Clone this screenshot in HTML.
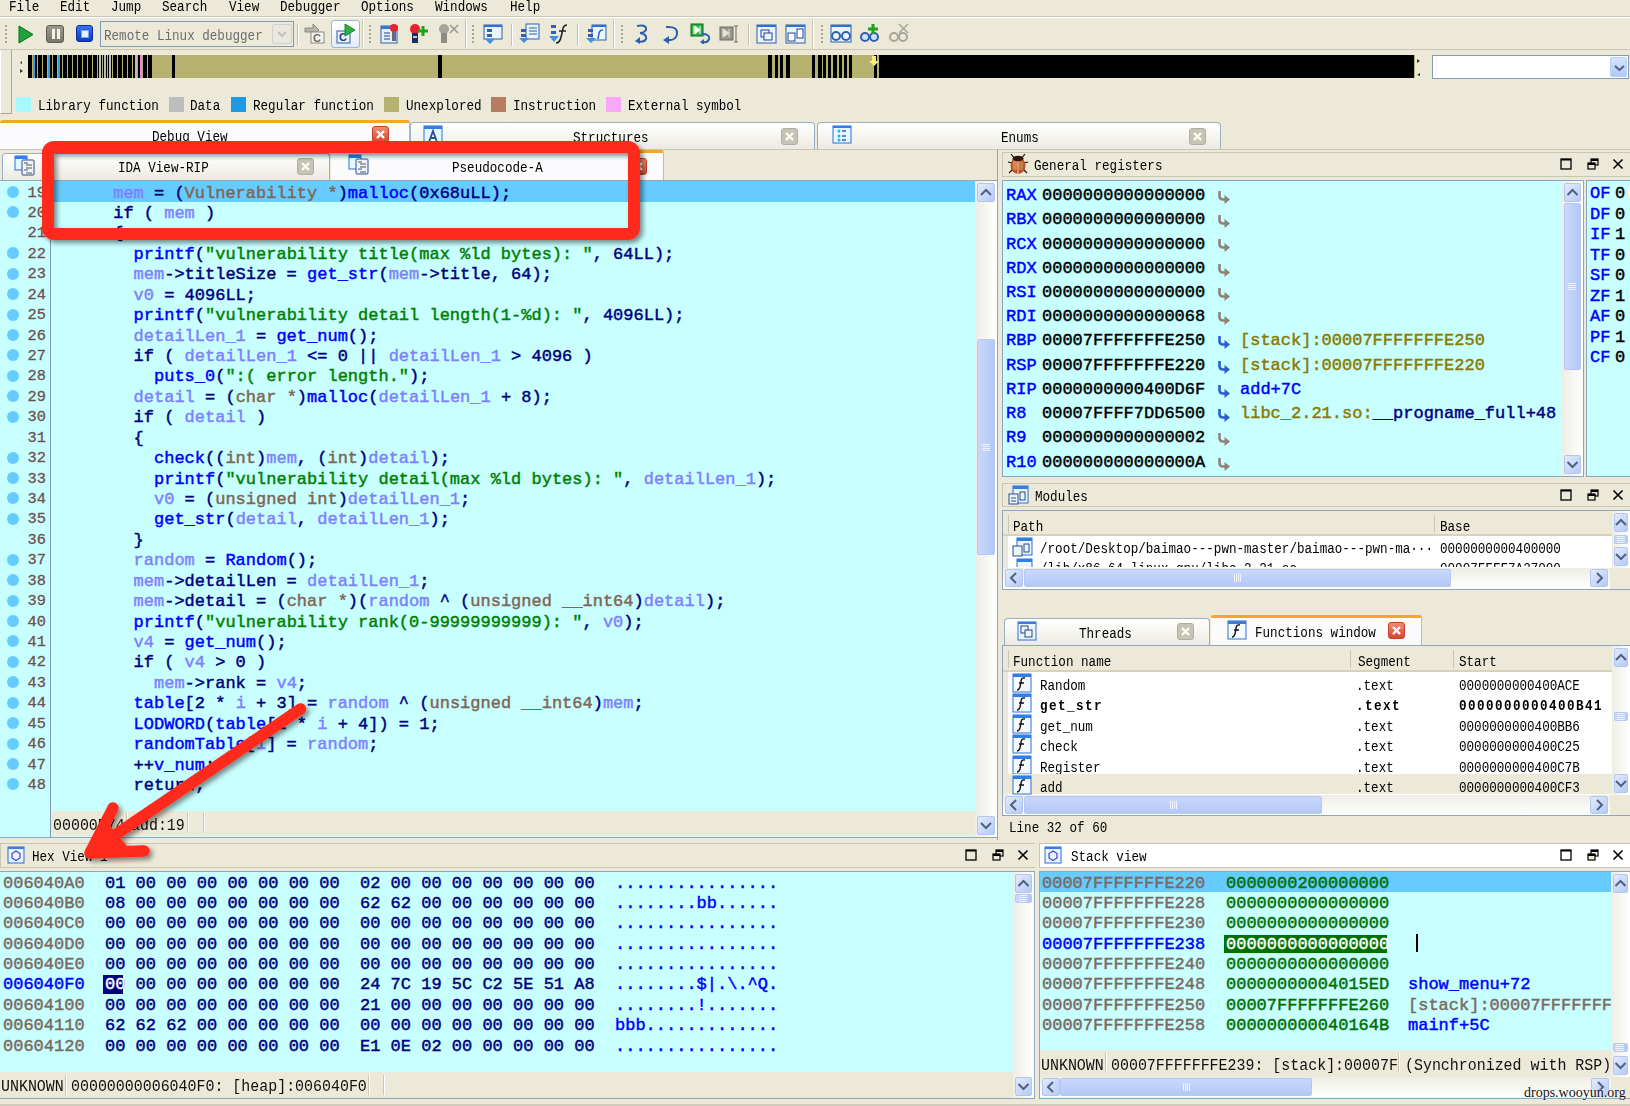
<!DOCTYPE html><html><head><meta charset="utf-8"><style>
*{margin:0;padding:0;box-sizing:border-box}
html,body{width:1630px;height:1106px;overflow:hidden;background:#ECE9D8;position:relative}
.t{position:absolute;white-space:pre;line-height:1}
.m{position:absolute;white-space:pre;font-family:'Liberation Mono', monospace;font-size:17px;line-height:20px;-webkit-text-stroke:0.45px currentColor}
.ui{position:absolute;white-space:pre;font-family:'Liberation Mono', monospace;font-size:12.6px;line-height:14px;color:#000}
.nv{color:#000080} .bl{color:#0000FF} .pu{color:#8080FF} .gr{color:#008000} .ty{color:#806656}
</style></head><body>
<div style="position:absolute;left:0px;top:16px;width:1630px;height:1px;background:#C9C6B4"></div>
<div style="position:absolute;left:0px;top:17px;width:1630px;height:1px;background:#FFFFFF"></div>
<div class="t" style="left:9px;top:-0.9999999999999998px;font-family:'Liberation Mono', monospace;font-size:12.6px;line-height:14px;color:#000;transform:scaleY(1.16);transform-origin:0 0;">File</div>
<div class="t" style="left:60px;top:-0.9999999999999998px;font-family:'Liberation Mono', monospace;font-size:12.6px;line-height:14px;color:#000;transform:scaleY(1.16);transform-origin:0 0;">Edit</div>
<div class="t" style="left:111px;top:-0.9999999999999998px;font-family:'Liberation Mono', monospace;font-size:12.6px;line-height:14px;color:#000;transform:scaleY(1.16);transform-origin:0 0;">Jump</div>
<div class="t" style="left:162px;top:-0.9999999999999998px;font-family:'Liberation Mono', monospace;font-size:12.6px;line-height:14px;color:#000;transform:scaleY(1.16);transform-origin:0 0;">Search</div>
<div class="t" style="left:229px;top:-0.9999999999999998px;font-family:'Liberation Mono', monospace;font-size:12.6px;line-height:14px;color:#000;transform:scaleY(1.16);transform-origin:0 0;">View</div>
<div class="t" style="left:280px;top:-0.9999999999999998px;font-family:'Liberation Mono', monospace;font-size:12.6px;line-height:14px;color:#000;transform:scaleY(1.16);transform-origin:0 0;">Debugger</div>
<div class="t" style="left:361px;top:-0.9999999999999998px;font-family:'Liberation Mono', monospace;font-size:12.6px;line-height:14px;color:#000;transform:scaleY(1.16);transform-origin:0 0;">Options</div>
<div class="t" style="left:435px;top:-0.9999999999999998px;font-family:'Liberation Mono', monospace;font-size:12.6px;line-height:14px;color:#000;transform:scaleY(1.16);transform-origin:0 0;">Windows</div>
<div class="t" style="left:510px;top:-0.9999999999999998px;font-family:'Liberation Mono', monospace;font-size:12.6px;line-height:14px;color:#000;transform:scaleY(1.16);transform-origin:0 0;">Help</div>
<div style="position:absolute;left:0px;top:49px;width:1630px;height:1px;background:#C9C6B4"></div>
<div style="position:absolute;left:5px;top:25px;width:2px;height:2px;background:#A8A593"></div><div style="position:absolute;left:5px;top:29px;width:2px;height:2px;background:#A8A593"></div><div style="position:absolute;left:5px;top:33px;width:2px;height:2px;background:#A8A593"></div><div style="position:absolute;left:5px;top:37px;width:2px;height:2px;background:#A8A593"></div><div style="position:absolute;left:5px;top:41px;width:2px;height:2px;background:#A8A593"></div>
<div style="position:absolute;left:369px;top:25px;width:2px;height:2px;background:#A8A593"></div><div style="position:absolute;left:369px;top:29px;width:2px;height:2px;background:#A8A593"></div><div style="position:absolute;left:369px;top:33px;width:2px;height:2px;background:#A8A593"></div><div style="position:absolute;left:369px;top:37px;width:2px;height:2px;background:#A8A593"></div><div style="position:absolute;left:369px;top:41px;width:2px;height:2px;background:#A8A593"></div>
<div style="position:absolute;left:472px;top:25px;width:2px;height:2px;background:#A8A593"></div><div style="position:absolute;left:472px;top:29px;width:2px;height:2px;background:#A8A593"></div><div style="position:absolute;left:472px;top:33px;width:2px;height:2px;background:#A8A593"></div><div style="position:absolute;left:472px;top:37px;width:2px;height:2px;background:#A8A593"></div><div style="position:absolute;left:472px;top:41px;width:2px;height:2px;background:#A8A593"></div>
<div style="position:absolute;left:621px;top:25px;width:2px;height:2px;background:#A8A593"></div><div style="position:absolute;left:621px;top:29px;width:2px;height:2px;background:#A8A593"></div><div style="position:absolute;left:621px;top:33px;width:2px;height:2px;background:#A8A593"></div><div style="position:absolute;left:621px;top:37px;width:2px;height:2px;background:#A8A593"></div><div style="position:absolute;left:621px;top:41px;width:2px;height:2px;background:#A8A593"></div>
<div style="position:absolute;left:821px;top:25px;width:2px;height:2px;background:#A8A593"></div><div style="position:absolute;left:821px;top:29px;width:2px;height:2px;background:#A8A593"></div><div style="position:absolute;left:821px;top:33px;width:2px;height:2px;background:#A8A593"></div><div style="position:absolute;left:821px;top:37px;width:2px;height:2px;background:#A8A593"></div><div style="position:absolute;left:821px;top:41px;width:2px;height:2px;background:#A8A593"></div>
<div style="position:absolute;left:362px;top:19px;width:1px;height:30px;background:#C9C6B4"></div>
<div style="position:absolute;left:363px;top:19px;width:1px;height:30px;background:#FFFFFF"></div>
<div style="position:absolute;left:465px;top:19px;width:1px;height:30px;background:#C9C6B4"></div>
<div style="position:absolute;left:466px;top:19px;width:1px;height:30px;background:#FFFFFF"></div>
<div style="position:absolute;left:613px;top:19px;width:1px;height:30px;background:#C9C6B4"></div>
<div style="position:absolute;left:614px;top:19px;width:1px;height:30px;background:#FFFFFF"></div>
<div style="position:absolute;left:812px;top:19px;width:1px;height:30px;background:#C9C6B4"></div>
<div style="position:absolute;left:813px;top:19px;width:1px;height:30px;background:#FFFFFF"></div>
<div style="position:absolute;left:297px;top:24px;width:1px;height:22px;background:#C5C2B2"></div>
<div style="position:absolute;left:298px;top:24px;width:1px;height:22px;background:#FFFFFF"></div>
<div style="position:absolute;left:511px;top:24px;width:1px;height:22px;background:#C5C2B2"></div>
<div style="position:absolute;left:512px;top:24px;width:1px;height:22px;background:#FFFFFF"></div>
<div style="position:absolute;left:577px;top:24px;width:1px;height:22px;background:#C5C2B2"></div>
<div style="position:absolute;left:578px;top:24px;width:1px;height:22px;background:#FFFFFF"></div>
<div style="position:absolute;left:748px;top:24px;width:1px;height:22px;background:#C5C2B2"></div>
<div style="position:absolute;left:749px;top:24px;width:1px;height:22px;background:#FFFFFF"></div>
<svg style="position:absolute;left:17px;top:25px" width="18" height="19"><path d="M2 1 L16 9.5 L2 18 Z" fill="#1FA33A" stroke="#0B6B1D" stroke-width="1"/></svg>
<div style="position:absolute;left:46px;top:25px;width:18px;height:18px;background:linear-gradient(#9C9A8C,#7A786B);border:1px solid #5F5D52;border-radius:3px"><div style="position:absolute;left:5px;top:3px;width:3px;height:10px;background:#F2F2EA"></div><div style="position:absolute;left:10px;top:3px;width:3px;height:10px;background:#F2F2EA"></div></div>
<div style="position:absolute;left:76px;top:25px;width:17px;height:17px;background:linear-gradient(#3A72F0,#0A3DC8);border:1px solid #0A2A9A;border-radius:3px"><div style="position:absolute;left:4px;top:4px;width:8px;height:8px;background:#E6F0FF;border:1px solid #7AA0F0"></div></div>
<div style="position:absolute;left:100px;top:21px;width:194px;height:26px;background:#ECE9D8;border:1px solid #7F9DB9"></div>
<div class="t" style="left:104px;top:28.3px;font-family:'Liberation Mono', monospace;font-size:12.6px;line-height:14px;color:#6D6D6D;transform:scaleY(1.16);transform-origin:0 0;">Remote Linux debugger</div>
<div style="position:absolute;left:272px;top:24px;width:20px;height:20px;background:#E8E7E0;border:1px solid #D2D1C8;border-radius:2px"><svg width="18" height="18" style="position:absolute;left:0;top:0"><path d="M5 7 L9 11 L13 7" fill="none" stroke="#C4C3BA" stroke-width="2"/></svg></div>
<svg style="position:absolute;left:304px;top:23px" width="22" height="21" viewBox="0 0 22 21"><path d="M1 5 L9 5 L9 1 L15 7 L9 13 L9 9 L1 9 Z" fill="#B8B6A8" stroke="#8A887C"/><rect x="7" y="9" width="13" height="11" fill="#F4F3EE" stroke="#8A887C"/><text x="9" y="19" font-family="Liberation Sans" font-weight="bold" font-size="11" fill="#6E6C62">C</text></svg>
<div style="position:absolute;left:331px;top:20px;width:29px;height:28px;background:linear-gradient(#FFFFFF,#E3ECF8);border:1px solid #9CB5D9;border-radius:3px"></div>
<svg style="position:absolute;left:335px;top:23px" width="22" height="22" viewBox="0 0 22 22"><rect x="2" y="8" width="13" height="12" fill="#E8F0FA" stroke="#2E5AA8"/><text x="4" y="18" font-family="Liberation Sans" font-weight="bold" font-size="11" fill="#1B3F8F">C</text><path d="M10 1 L10 13 L20 7 Z" fill="#2BB040" stroke="#138A28"/></svg>
<svg style="position:absolute;left:380px;top:23px" width="20" height="21" viewBox="0 0 20 21"><rect x="1" y="3" width="16" height="17" fill="#E6F0FB" stroke="#2F5FB0"/><rect x="1" y="3" width="16" height="3" fill="#3A74D8"/><path d="M4 10h6M4 13h6M4 16h6" stroke="#23448A"/><circle cx="14" cy="5" r="4" fill="#E8222A"/><rect x="12" y="8" width="4" height="10" fill="#6B6A7A"/></svg>
<svg style="position:absolute;left:409px;top:23px" width="20" height="21" viewBox="0 0 20 21"><circle cx="6" cy="6" r="5" fill="#E8222A"/><rect x="3" y="10" width="6" height="10" fill="#1B2A6B"/><rect x="4" y="13" width="4" height="2" fill="#C8C8C8"/><path d="M14 3v10M9 8h10" stroke="#23A020" stroke-width="3"/></svg>
<svg style="position:absolute;left:438px;top:23px" width="21" height="21" viewBox="0 0 21 21"><circle cx="6" cy="6" r="5" fill="#A7A598"/><rect x="3" y="10" width="6" height="10" fill="#8E8C80"/><path d="M12 2 L20 10 M20 2 L12 10" stroke="#9A988C" stroke-width="1.5"/></svg>
<svg style="position:absolute;left:483px;top:23px" width="21" height="21" viewBox="0 0 21 21"><rect x="1" y="2" width="18" height="14" fill="#EAF4FC" stroke="#2F5FB0"/><rect x="1" y="2" width="18" height="2" fill="#2F6FD8"/><rect x="4" y="6" width="5" height="3" fill="#2F5FB0"/><rect x="4" y="11" width="5" height="3" fill="#2F5FB0"/><path d="M2 16 L12 16 L7 21 Z" fill="#3F8EE8"/></svg>
<svg style="position:absolute;left:519px;top:23px" width="21" height="21" viewBox="0 0 21 21"><rect x="7" y="1" width="13" height="15" fill="#EAF4FC" stroke="#2F5FB0"/><path d="M10 5h8M10 8h8M10 11h8" stroke="#2F5FB0"/><rect x="2" y="6" width="5" height="3" fill="#2F5FB0"/><rect x="2" y="11" width="5" height="3" fill="#2F5FB0"/><path d="M0 15 L10 15 L5 20 Z" fill="#3F8EE8"/></svg>
<svg style="position:absolute;left:549px;top:23px" width="21" height="21" viewBox="0 0 21 21"><rect x="2" y="2" width="5" height="3" fill="#2F5FB0"/><rect x="2" y="8" width="5" height="3" fill="#2F5FB0"/><path d="M0 13 L10 13 L5 19 Z" fill="#3F8EE8"/><path d="M18 2 C13 2 14 8 12 14 C11 19 9 20 7 20 M10 8 h7" fill="none" stroke="#222" stroke-width="1.6"/></svg>
<svg style="position:absolute;left:586px;top:23px" width="21" height="21" viewBox="0 0 21 21"><rect x="6" y="2" width="14" height="15" fill="#EAF4FC" stroke="#2F5FB0"/><rect x="6" y="2" width="14" height="2" fill="#2F6FD8"/><rect x="2" y="6" width="5" height="3" fill="#2F5FB0"/><rect x="2" y="11" width="5" height="3" fill="#2F5FB0"/><path d="M0 15 L10 15 L5 20 Z" fill="#3F8EE8"/><path d="M17 7 C12 7 13 12 12 16" fill="none" stroke="#2F5FB0" stroke-width="1.5"/></svg>
<svg style="position:absolute;left:634px;top:23px" width="16" height="21" viewBox="0 0 16 21"><path d="M3 3 Q13 1 12 7 Q10 10 6 10 Q13 11 12 16 Q10 20 3 18" fill="none" stroke="#2F5FB0" stroke-width="2"/><path d="M1 18 L6 14 L6 21 Z" fill="#2F5FB0"/></svg>
<svg style="position:absolute;left:662px;top:23px" width="18" height="21" viewBox="0 0 18 21"><path d="M4 4 Q16 3 15 11 Q14 18 5 17" fill="none" stroke="#2F5FB0" stroke-width="2"/><path d="M1 17 L7 13 L7 21 Z" fill="#2F5FB0"/></svg>
<svg style="position:absolute;left:690px;top:23px" width="21" height="21" viewBox="0 0 21 21"><rect x="1" y="1" width="12" height="12" fill="#2BB040" stroke="#0D6B20"/><path d="M4 3 L4 11 M5 3 L10 7 L5 11 Z M10 3v8" stroke="#fff" fill="#fff"/><path d="M12 11 Q20 11 19 16 Q18 20 13 19" fill="none" stroke="#2F5FB0" stroke-width="2"/><path d="M10 19 L14 16 L14 22 Z" fill="#2F5FB0"/></svg>
<svg style="position:absolute;left:719px;top:23px" width="21" height="21" viewBox="0 0 21 21"><rect x="1" y="4" width="13" height="13" fill="#9A988C" stroke="#6E6C62"/><path d="M4 6 L4 14 L10 10 Z M10 6v8" stroke="#E6E4DA" fill="#E6E4DA"/><path d="M17 3v16 M15 3h4 M15 19h4" stroke="#6E6C62"/></svg>
<svg style="position:absolute;left:756px;top:23px" width="21" height="21" viewBox="0 0 21 21"><rect x="1" y="2" width="19" height="18" fill="#EAF4FC" stroke="#2F5FB0"/><rect x="1" y="2" width="19" height="2" fill="#2F6FD8"/><rect x="5" y="7" width="8" height="7" fill="none" stroke="#23448A"/><rect x="8" y="10" width="8" height="7" fill="#EAF4FC" stroke="#23448A"/></svg>
<svg style="position:absolute;left:785px;top:23px" width="21" height="21" viewBox="0 0 21 21"><rect x="1" y="2" width="19" height="18" fill="#EAF4FC" stroke="#2F5FB0"/><rect x="1" y="2" width="19" height="2" fill="#2F6FD8"/><rect x="3" y="10" width="7" height="8" fill="#fff" stroke="#23448A"/><rect x="12" y="6" width="6" height="9" fill="#fff" stroke="#23448A"/></svg>
<svg style="position:absolute;left:830px;top:23px" width="22" height="21" viewBox="0 0 22 21"><rect x="1" y="2" width="20" height="17" fill="#EAF4FC" stroke="#2F5FB0"/><rect x="1" y="2" width="20" height="2" fill="#2F6FD8"/><circle cx="6" cy="13" r="4" fill="none" stroke="#2F5FB0" stroke-width="2"/><circle cx="16" cy="13" r="4" fill="none" stroke="#2F5FB0" stroke-width="2"/></svg>
<svg style="position:absolute;left:859px;top:23px" width="22" height="21" viewBox="0 0 22 21"><circle cx="6" cy="14" r="4" fill="#CFE3F8" stroke="#2F5FB0" stroke-width="2"/><circle cx="15" cy="14" r="4" fill="#CFE3F8" stroke="#2F5FB0" stroke-width="2"/><path d="M14 1v10M9 6h10" stroke="#23A020" stroke-width="3"/></svg>
<svg style="position:absolute;left:888px;top:23px" width="23" height="21" viewBox="0 0 23 21"><circle cx="6" cy="14" r="4" fill="none" stroke="#A7A598" stroke-width="2"/><circle cx="15" cy="14" r="4" fill="none" stroke="#A7A598" stroke-width="2"/><path d="M11 1 L20 10 M20 1 L11 10" stroke="#A7A598" stroke-width="1.5"/></svg>
<div style="position:absolute;left:0px;top:50px;width:12px;height:64px;border-left:1px solid #FFFFFF;border-right:1px solid #ACA899;border-bottom:1px solid #ACA899"></div>
<svg style="position:absolute;left:19px;top:60px" width="5" height="16" viewBox="0 0 5 16"><path d="M1 3 L3 1 L3 4 Z M1 9 L4 11 L1 13 Z" fill="#333"/></svg>
<div style="position:absolute;left:28px;top:55px;width:1387px;height:23px;background:#B5B26F"></div><div style="position:absolute;left:28.0px;top:55px;width:3.7px;height:23px;background:#000"></div><div style="position:absolute;left:33.0px;top:55px;width:3.7px;height:23px;background:#000"></div><div style="position:absolute;left:38.0px;top:55px;width:3.7px;height:23px;background:#000"></div><div style="position:absolute;left:43.0px;top:55px;width:3.7px;height:23px;background:#000"></div><div style="position:absolute;left:48.0px;top:55px;width:3.7px;height:23px;background:#000"></div><div style="position:absolute;left:53.0px;top:55px;width:3.7px;height:23px;background:#000"></div><div style="position:absolute;left:58.0px;top:55px;width:3.7px;height:23px;background:#000"></div><div style="position:absolute;left:63.0px;top:55px;width:3.7px;height:23px;background:#000"></div><div style="position:absolute;left:68.0px;top:55px;width:3.7px;height:23px;background:#000"></div><div style="position:absolute;left:73.0px;top:55px;width:3.7px;height:23px;background:#000"></div><div style="position:absolute;left:78.0px;top:55px;width:3.7px;height:23px;background:#000"></div><div style="position:absolute;left:83.0px;top:55px;width:3.7px;height:23px;background:#000"></div><div style="position:absolute;left:88.0px;top:55px;width:3.7px;height:23px;background:#000"></div><div style="position:absolute;left:93.0px;top:55px;width:3.7px;height:23px;background:#000"></div><div style="position:absolute;left:98.0px;top:55px;width:3.7px;height:23px;background:#000"></div><div style="position:absolute;left:103.0px;top:55px;width:3.7px;height:23px;background:#000"></div><div style="position:absolute;left:108.0px;top:55px;width:3.7px;height:23px;background:#000"></div><div style="position:absolute;left:113.0px;top:55px;width:3.7px;height:23px;background:#000"></div><div style="position:absolute;left:118.0px;top:55px;width:3.7px;height:23px;background:#000"></div><div style="position:absolute;left:123.0px;top:55px;width:3.7px;height:23px;background:#000"></div><div style="position:absolute;left:128.0px;top:55px;width:3.7px;height:23px;background:#000"></div><div style="position:absolute;left:133.0px;top:55px;width:3.7px;height:23px;background:#000"></div><div style="position:absolute;left:138.0px;top:55px;width:3.7px;height:23px;background:#000"></div><div style="position:absolute;left:143.0px;top:55px;width:3.7px;height:23px;background:#000"></div><div style="position:absolute;left:148.0px;top:55px;width:3.7px;height:23px;background:#000"></div><div style="position:absolute;left:33px;top:55px;width:1.5px;height:23px;background:#2FA0E0"></div><div style="position:absolute;left:48px;top:55px;width:1.5px;height:23px;background:#2FA0E0"></div><div style="position:absolute;left:58px;top:55px;width:1.5px;height:23px;background:#2FA0E0"></div><div style="position:absolute;left:99px;top:55px;width:1.5px;height:23px;background:#BDBDBD"></div><div style="position:absolute;left:104px;top:55px;width:1.5px;height:23px;background:#BDBDBD"></div><div style="position:absolute;left:109px;top:55px;width:1.5px;height:23px;background:#BDBDBD"></div><div style="position:absolute;left:135px;top:55px;width:1.5px;height:23px;background:#BDBDBD"></div><div style="position:absolute;left:140px;top:55px;width:1.5px;height:23px;background:#F080F0"></div><div style="position:absolute;left:171.5px;top:55px;width:3.5px;height:23px;background:#000"></div><div style="position:absolute;left:438px;top:55px;width:3.5px;height:23px;background:#000"></div><div style="position:absolute;left:768px;top:55px;width:4px;height:23px;background:#000"></div><div style="position:absolute;left:774.8px;top:55px;width:3.5px;height:23px;background:#000"></div><div style="position:absolute;left:779.7px;top:55px;width:3.5px;height:23px;background:#000"></div><div style="position:absolute;left:786px;top:55px;width:3.6px;height:23px;background:#000"></div><div style="position:absolute;left:811.6px;top:55px;width:3.4px;height:23px;background:#000"></div><div style="position:absolute;left:818px;top:55px;width:3.5px;height:23px;background:#000"></div><div style="position:absolute;left:823px;top:55px;width:3.4px;height:23px;background:#000"></div><div style="position:absolute;left:827.8px;top:55px;width:3.5px;height:23px;background:#000"></div><div style="position:absolute;left:833.2px;top:55px;width:3.5px;height:23px;background:#000"></div><div style="position:absolute;left:838.6px;top:55px;width:3.4px;height:23px;background:#000"></div><div style="position:absolute;left:843.5px;top:55px;width:3.5px;height:23px;background:#000"></div><div style="position:absolute;left:849px;top:55px;width:3.4px;height:23px;background:#000"></div><div style="position:absolute;left:874px;top:55px;width:3.4px;height:23px;background:#000"></div><div style="position:absolute;left:879.4px;top:55px;width:534.6px;height:23px;background:#000"></div><svg style="position:absolute;left:869px;top:56px" width="10" height="10" viewBox="0 0 10 10"><path d="M3 0h4v5h3l-5 5l-5-5h3z" fill="#F8F070"/></svg>
<svg style="position:absolute;left:1415px;top:57px" width="6" height="20" viewBox="0 0 6 20"><path d="M2 2 L5 4 L2 6 Z M5 16 L2 18 L5 19 Z" fill="#333"/></svg>
<div style="position:absolute;left:1432px;top:55px;width:197px;height:24px;background:#fff;border:1px solid #7F9DB9"></div>
<div style="position:absolute;left:1610px;top:57px;width:17px;height:20px;background:linear-gradient(#D6E3FC,#B0C8F5);border:1px solid #B9CDF5;border-radius:2px"><svg style="position:absolute;left:0px;top:0px" width="17" height="20" viewBox="0 0 17 20"><path d="M4 8 L8.5 12 L13 8" fill="none" stroke="#4D6185" stroke-width="2"/></svg></div>
<div style="position:absolute;left:16px;top:97px;width:15px;height:15px;background:#A8F8FF"></div>
<div class="t" style="left:38px;top:97.8px;font-family:'Liberation Mono', monospace;font-size:12.6px;line-height:14px;color:#000;transform:scaleY(1.16);transform-origin:0 0;">Library function</div>
<div style="position:absolute;left:169px;top:97px;width:15px;height:15px;background:#BEBEBE"></div>
<div class="t" style="left:190px;top:97.8px;font-family:'Liberation Mono', monospace;font-size:12.6px;line-height:14px;color:#000;transform:scaleY(1.16);transform-origin:0 0;">Data</div>
<div style="position:absolute;left:231px;top:97px;width:15px;height:15px;background:#1E9AE5"></div>
<div class="t" style="left:253px;top:97.8px;font-family:'Liberation Mono', monospace;font-size:12.6px;line-height:14px;color:#000;transform:scaleY(1.16);transform-origin:0 0;">Regular function</div>
<div style="position:absolute;left:384px;top:97px;width:15px;height:15px;background:#B5B26F"></div>
<div class="t" style="left:406px;top:97.8px;font-family:'Liberation Mono', monospace;font-size:12.6px;line-height:14px;color:#000;transform:scaleY(1.16);transform-origin:0 0;">Unexplored</div>
<div style="position:absolute;left:491px;top:97px;width:15px;height:15px;background:#B87C60"></div>
<div class="t" style="left:513px;top:97.8px;font-family:'Liberation Mono', monospace;font-size:12.6px;line-height:14px;color:#000;transform:scaleY(1.16);transform-origin:0 0;">Instruction</div>
<div style="position:absolute;left:606px;top:97px;width:15px;height:15px;background:#F8A8F8"></div>
<div class="t" style="left:628px;top:97.8px;font-family:'Liberation Mono', monospace;font-size:12.6px;line-height:14px;color:#000;transform:scaleY(1.16);transform-origin:0 0;">External symbol</div>
<div style="position:absolute;left:0px;top:120px;width:410px;height:30px;background:#FBFBFD;border-top:3px solid #F5A623;border-radius:3px 3px 0 0;border-right:1px solid #AFBFCF"></div>
<div class="t" style="left:152px;top:129.3px;font-family:'Liberation Mono', monospace;font-size:12.6px;line-height:14px;color:#000;transform:scaleY(1.16);transform-origin:0 0;">Debug View</div>
<div style="position:absolute;left:372px;top:126px;width:17px;height:17px;background:linear-gradient(#F08A70,#D8472E);border:1px solid #C0402A;border-radius:3px"><svg style="position:absolute;left:0px;top:0px" width="15" height="15" viewBox="0 0 15 15"><path d="M4 4 L11 11 M11 4 L4 11" stroke="#fff" stroke-width="2.4"/></svg></div>
<div style="position:absolute;left:410px;top:122px;width:405px;height:28px;background:linear-gradient(#FFFFFF,#F3F2EC 60%,#EBE9E0);border:1px solid #9AAFC4;border-bottom:none;border-radius:4px 4px 0 0"></div>
<svg style="position:absolute;left:423px;top:125px" width="20" height="20" viewBox="0 0 20 20"><rect x="1" y="1" width="18" height="18" fill="#E6F8FF" stroke="#2F6FD8"/><rect x="1" y="1" width="18" height="3" fill="#2F7FE8"/><path d="M6 17 L10 6 L14 17 M7.5 13h5" fill="none" stroke="#2D4E8A" stroke-width="1.8"/></svg>
<div class="t" style="left:573px;top:130.3px;font-family:'Liberation Mono', monospace;font-size:12.6px;line-height:14px;color:#000;transform:scaleY(1.16);transform-origin:0 0;">Structures</div>
<div style="position:absolute;left:781px;top:128px;width:17px;height:17px;background:#C6C4B6;border:1px solid #B0AE9F;border-radius:3px"><svg style="position:absolute;left:0px;top:0px" width="15" height="15" viewBox="0 0 15 15"><path d="M4 4 L11 11 M11 4 L4 11" stroke="#FFFDF0" stroke-width="2.4"/></svg></div>
<div style="position:absolute;left:817px;top:122px;width:404px;height:28px;background:linear-gradient(#FFFFFF,#F3F2EC 60%,#EBE9E0);border:1px solid #9AAFC4;border-bottom:none;border-radius:4px 4px 0 0"></div>
<svg style="position:absolute;left:832px;top:125px" width="20" height="19" viewBox="0 0 20 19"><rect x="1" y="1" width="18" height="17" fill="#E6F8FF" stroke="#2F6FD8"/><rect x="1" y="1" width="18" height="2" fill="#2F7FE8"/><circle cx="7" cy="6" r="1.5" fill="#19B8E8"/><circle cx="7" cy="11" r="1.5" fill="#19B8E8"/><circle cx="7" cy="15" r="1.5" fill="#19B8E8"/><path d="M10 6h4M10 11h4M10 15h4" stroke="#2F5FB0" stroke-width="1.4"/></svg>
<div class="t" style="left:1001px;top:130.3px;font-family:'Liberation Mono', monospace;font-size:12.6px;line-height:14px;color:#000;transform:scaleY(1.16);transform-origin:0 0;">Enums</div>
<div style="position:absolute;left:1189px;top:128px;width:17px;height:17px;background:#C6C4B6;border:1px solid #B0AE9F;border-radius:3px"><svg style="position:absolute;left:0px;top:0px" width="15" height="15" viewBox="0 0 15 15"><path d="M4 4 L11 11 M11 4 L4 11" stroke="#FFFDF0" stroke-width="2.4"/></svg></div>
<div style="position:absolute;left:0px;top:149px;width:1630px;height:1px;background:#C9C6B4"></div>
<div style="position:absolute;left:2px;top:153px;width:328px;height:28px;background:linear-gradient(#FFFFFF,#F3F2EC 60%,#EBE9E0);border:1px solid #9AAFC4;border-bottom:none;border-radius:4px 4px 0 0"></div>
<svg style="position:absolute;left:14px;top:155px" width="21" height="21" viewBox="0 0 21 21"><rect x="1" y="1" width="12" height="14" fill="#E6F8FF" stroke="#2F6FD8"/><rect x="1" y="1" width="12" height="3" fill="#2F7FE8"/><rect x="8" y="5" width="12" height="15" rx="1" fill="#EEF3FB" stroke="#2D4E8A"/><path d="M10 8h4M12 10h6M12 13h6M10 15h4M12 18h6" stroke="#555"/></svg>
<div class="t" style="left:118px;top:160.3px;font-family:'Liberation Mono', monospace;font-size:12.6px;line-height:14px;color:#000;transform:scaleY(1.16);transform-origin:0 0;">IDA View-RIP</div>
<div style="position:absolute;left:297px;top:158px;width:17px;height:17px;background:#C6C4B6;border:1px solid #B0AE9F;border-radius:3px"><svg style="position:absolute;left:0px;top:0px" width="15" height="15" viewBox="0 0 15 15"><path d="M4 4 L11 11 M11 4 L4 11" stroke="#FFFDF0" stroke-width="2.4"/></svg></div>
<div style="position:absolute;left:331px;top:150px;width:333px;height:31px;background:#FBFBFD;border-top:3px solid #F5A623;border-radius:3px 3px 0 0;border-right:1px solid #AFBFCF"></div>
<svg style="position:absolute;left:348px;top:154px" width="21" height="21" viewBox="0 0 21 21"><rect x="1" y="1" width="12" height="14" fill="#E6F8FF" stroke="#2F6FD8"/><rect x="1" y="1" width="12" height="3" fill="#2F7FE8"/><rect x="8" y="5" width="12" height="15" rx="1" fill="#EEF3FB" stroke="#2D4E8A"/><path d="M10 8h4M12 10h6M12 13h6M10 15h4M12 18h6" stroke="#555"/></svg>
<div class="t" style="left:452px;top:160.3px;font-family:'Liberation Mono', monospace;font-size:12.6px;line-height:14px;color:#000;transform:scaleY(1.16);transform-origin:0 0;">Pseudocode-A</div>
<div style="position:absolute;left:630px;top:158px;width:17px;height:17px;background:linear-gradient(#F08A70,#D8472E);border:1px solid #C0402A;border-radius:3px"><svg style="position:absolute;left:0px;top:0px" width="15" height="15" viewBox="0 0 15 15"><path d="M4 4 L11 11 M11 4 L4 11" stroke="#fff" stroke-width="2.4"/></svg></div>
<div style="position:absolute;left:0px;top:180px;width:998px;height:1px;background:#9AA6B0"></div>
<div style="position:absolute;left:0px;top:181px;width:975px;height:656px;background:#C8FFFF"></div>
<div style="position:absolute;left:51px;top:181px;width:924px;height:21px;background:#66CCFF"></div>
<div style="position:absolute;left:50px;top:181px;width:1px;height:656px;background:#8497B8"></div>
<div style="position:absolute;left:0px;top:837px;width:998px;height:1px;background:#8FA4C0"></div>
<div style="position:absolute;left:997px;top:181px;width:1px;height:657px;background:#8FA4C0"></div>
<div style="position:absolute;left:975px;top:181px;width:22px;height:656px;background:linear-gradient(90deg,#EEEDE5,#FFFFFF)"></div><div style="position:absolute;left:977px;top:183px;width:18px;height:19px;background:linear-gradient(135deg,#E2EBFE,#B6CAF5);border:1px solid #B3C6EE;border-radius:2px"><svg style="position:absolute;left:0px;top:0px" width="16" height="17" viewBox="0 0 16 17"><path d="M3.0 11 L8.0 6 L13.0 11" fill="none" stroke="#4D6185" stroke-width="2"/></svg></div><div style="position:absolute;left:977px;top:816px;width:18px;height:19px;background:linear-gradient(135deg,#E2EBFE,#B6CAF5);border:1px solid #B3C6EE;border-radius:2px"><svg style="position:absolute;left:0px;top:0px" width="16" height="17" viewBox="0 0 16 17"><path d="M3.0 6 L8.0 11 L13.0 6" fill="none" stroke="#4D6185" stroke-width="2"/></svg></div><div style="position:absolute;left:977px;top:339px;width:18px;height:216px;background:linear-gradient(90deg,#C9D8FC,#B4C8F6);border:1px solid #B5C8F0;border-radius:2px"></div><div style="position:absolute;left:982px;top:444px;width:8px;height:1px;background:#EEF3FF"></div><div style="position:absolute;left:982px;top:446px;width:8px;height:1px;background:#EEF3FF"></div><div style="position:absolute;left:982px;top:448px;width:8px;height:1px;background:#EEF3FF"></div><div style="position:absolute;left:982px;top:450px;width:8px;height:1px;background:#EEF3FF"></div>
<div style="position:absolute;left:51px;top:811px;width:924px;height:25px;background:#ECE9D8"></div>
<div class="t" style="left:53px;top:816.5px;font-family:'Liberation Mono', monospace;font-size:14.95px;line-height:16px;color:#111;transform:scaleY(1.1);transform-origin:0 0">00000D74</div>
<div class="t" style="left:131px;top:816.5px;font-family:'Liberation Mono', monospace;font-size:14.95px;line-height:16px;color:#111;transform:scaleY(1.1);transform-origin:0 0">add:19</div>
<div style="position:absolute;left:126px;top:813px;width:1px;height:20px;background:#C9C6B4"></div>
<div style="position:absolute;left:127px;top:813px;width:1px;height:20px;background:#fff"></div>
<div style="position:absolute;left:187px;top:813px;width:1px;height:20px;background:#C9C6B4"></div>
<div style="position:absolute;left:188px;top:813px;width:1px;height:20px;background:#fff"></div>
<div style="position:absolute;left:203px;top:813px;width:1px;height:20px;background:#C9C6B4"></div>
<div style="position:absolute;left:204px;top:813px;width:1px;height:20px;background:#fff"></div>
<div class="m" style="left:113.2px;top:183.50px"><span class="pu">mem</span><span class="nv"> = (</span><span class="ty">Vulnerability *</span><span class="nv">)</span><span class="bl">malloc</span><span class="nv">(0x68uLL);</span></div><div style="position:absolute;left:7px;top:185.9px;width:12px;height:12px;background:#66CCFF;border-radius:50%"></div><div class="t" style="left:27.5px;top:185.5px;font-family:'Liberation Mono', monospace;font-size:15.3px;color:#6E5050;-webkit-text-stroke:0.3px currentColor">19</div><div class="m" style="left:113.2px;top:203.93px"><span class="nv">if ( </span><span class="pu">mem</span><span class="nv"> )</span></div><div style="position:absolute;left:7px;top:206.3px;width:12px;height:12px;background:#66CCFF;border-radius:50%"></div><div class="t" style="left:27.5px;top:205.9px;font-family:'Liberation Mono', monospace;font-size:15.3px;color:#6E5050;-webkit-text-stroke:0.3px currentColor">20</div><div class="m" style="left:113.2px;top:224.36px"><span class="nv">{</span></div><div class="t" style="left:27.5px;top:226.4px;font-family:'Liberation Mono', monospace;font-size:15.3px;color:#6E5050;-webkit-text-stroke:0.3px currentColor">21</div><div class="m" style="left:133.6px;top:244.79px"><span class="bl">printf</span><span class="nv">(</span><span class="gr">&quot;vulnerability title(max %ld bytes): &quot;</span><span class="nv">, 64LL);</span></div><div style="position:absolute;left:7px;top:247.2px;width:12px;height:12px;background:#66CCFF;border-radius:50%"></div><div class="t" style="left:27.5px;top:246.8px;font-family:'Liberation Mono', monospace;font-size:15.3px;color:#6E5050;-webkit-text-stroke:0.3px currentColor">22</div><div class="m" style="left:133.6px;top:265.22px"><span class="pu">mem</span><span class="nv">-&gt;titleSize = </span><span class="bl">get_str</span><span class="nv">(</span><span class="pu">mem</span><span class="nv">-&gt;title, 64);</span></div><div style="position:absolute;left:7px;top:267.6px;width:12px;height:12px;background:#66CCFF;border-radius:50%"></div><div class="t" style="left:27.5px;top:267.2px;font-family:'Liberation Mono', monospace;font-size:15.3px;color:#6E5050;-webkit-text-stroke:0.3px currentColor">23</div><div class="m" style="left:133.6px;top:285.65px"><span class="pu">v0</span><span class="nv"> = 4096LL;</span></div><div style="position:absolute;left:7px;top:288.0px;width:12px;height:12px;background:#66CCFF;border-radius:50%"></div><div class="t" style="left:27.5px;top:287.6px;font-family:'Liberation Mono', monospace;font-size:15.3px;color:#6E5050;-webkit-text-stroke:0.3px currentColor">24</div><div class="m" style="left:133.6px;top:306.08px"><span class="bl">printf</span><span class="nv">(</span><span class="gr">&quot;vulnerability detail length(1-%d): &quot;</span><span class="nv">, 4096LL);</span></div><div style="position:absolute;left:7px;top:308.5px;width:12px;height:12px;background:#66CCFF;border-radius:50%"></div><div class="t" style="left:27.5px;top:308.1px;font-family:'Liberation Mono', monospace;font-size:15.3px;color:#6E5050;-webkit-text-stroke:0.3px currentColor">25</div><div class="m" style="left:133.6px;top:326.51px"><span class="pu">detailLen_1</span><span class="nv"> = </span><span class="bl">get_num</span><span class="nv">();</span></div><div style="position:absolute;left:7px;top:328.9px;width:12px;height:12px;background:#66CCFF;border-radius:50%"></div><div class="t" style="left:27.5px;top:328.5px;font-family:'Liberation Mono', monospace;font-size:15.3px;color:#6E5050;-webkit-text-stroke:0.3px currentColor">26</div><div class="m" style="left:133.6px;top:346.94px"><span class="nv">if ( </span><span class="pu">detailLen_1</span><span class="nv"> &lt;= 0 || </span><span class="pu">detailLen_1</span><span class="nv"> &gt; 4096 )</span></div><div style="position:absolute;left:7px;top:349.3px;width:12px;height:12px;background:#66CCFF;border-radius:50%"></div><div class="t" style="left:27.5px;top:348.9px;font-family:'Liberation Mono', monospace;font-size:15.3px;color:#6E5050;-webkit-text-stroke:0.3px currentColor">27</div><div class="m" style="left:154.0px;top:367.37px"><span class="bl">puts_0</span><span class="nv">(</span><span class="gr">&quot;:( error length.&quot;</span><span class="nv">);</span></div><div style="position:absolute;left:7px;top:369.8px;width:12px;height:12px;background:#66CCFF;border-radius:50%"></div><div class="t" style="left:27.5px;top:369.4px;font-family:'Liberation Mono', monospace;font-size:15.3px;color:#6E5050;-webkit-text-stroke:0.3px currentColor">28</div><div class="m" style="left:133.6px;top:387.80px"><span class="pu">detail</span><span class="nv"> = (</span><span class="ty">char *</span><span class="nv">)</span><span class="bl">malloc</span><span class="nv">(</span><span class="pu">detailLen_1</span><span class="nv"> + 8);</span></div><div style="position:absolute;left:7px;top:390.2px;width:12px;height:12px;background:#66CCFF;border-radius:50%"></div><div class="t" style="left:27.5px;top:389.8px;font-family:'Liberation Mono', monospace;font-size:15.3px;color:#6E5050;-webkit-text-stroke:0.3px currentColor">29</div><div class="m" style="left:133.6px;top:408.23px"><span class="nv">if ( </span><span class="pu">detail</span><span class="nv"> )</span></div><div style="position:absolute;left:7px;top:410.6px;width:12px;height:12px;background:#66CCFF;border-radius:50%"></div><div class="t" style="left:27.5px;top:410.2px;font-family:'Liberation Mono', monospace;font-size:15.3px;color:#6E5050;-webkit-text-stroke:0.3px currentColor">30</div><div class="m" style="left:133.6px;top:428.66px"><span class="nv">{</span></div><div class="t" style="left:27.5px;top:430.7px;font-family:'Liberation Mono', monospace;font-size:15.3px;color:#6E5050;-webkit-text-stroke:0.3px currentColor">31</div><div class="m" style="left:154.0px;top:449.09px"><span class="bl">check</span><span class="nv">((</span><span class="ty">int</span><span class="nv">)</span><span class="pu">mem</span><span class="nv">, (</span><span class="ty">int</span><span class="nv">)</span><span class="pu">detail</span><span class="nv">);</span></div><div style="position:absolute;left:7px;top:451.5px;width:12px;height:12px;background:#66CCFF;border-radius:50%"></div><div class="t" style="left:27.5px;top:451.1px;font-family:'Liberation Mono', monospace;font-size:15.3px;color:#6E5050;-webkit-text-stroke:0.3px currentColor">32</div><div class="m" style="left:154.0px;top:469.52px"><span class="bl">printf</span><span class="nv">(</span><span class="gr">&quot;vulnerability detail(max %ld bytes): &quot;</span><span class="nv">, </span><span class="pu">detailLen_1</span><span class="nv">);</span></div><div style="position:absolute;left:7px;top:471.9px;width:12px;height:12px;background:#66CCFF;border-radius:50%"></div><div class="t" style="left:27.5px;top:471.5px;font-family:'Liberation Mono', monospace;font-size:15.3px;color:#6E5050;-webkit-text-stroke:0.3px currentColor">33</div><div class="m" style="left:154.0px;top:489.95px"><span class="pu">v0</span><span class="nv"> = (</span><span class="ty">unsigned int</span><span class="nv">)</span><span class="pu">detailLen_1</span><span class="nv">;</span></div><div style="position:absolute;left:7px;top:492.3px;width:12px;height:12px;background:#66CCFF;border-radius:50%"></div><div class="t" style="left:27.5px;top:491.9px;font-family:'Liberation Mono', monospace;font-size:15.3px;color:#6E5050;-webkit-text-stroke:0.3px currentColor">34</div><div class="m" style="left:154.0px;top:510.38px"><span class="bl">get_str</span><span class="nv">(</span><span class="pu">detail</span><span class="nv">, </span><span class="pu">detailLen_1</span><span class="nv">);</span></div><div style="position:absolute;left:7px;top:512.8px;width:12px;height:12px;background:#66CCFF;border-radius:50%"></div><div class="t" style="left:27.5px;top:512.4px;font-family:'Liberation Mono', monospace;font-size:15.3px;color:#6E5050;-webkit-text-stroke:0.3px currentColor">35</div><div class="m" style="left:133.6px;top:530.81px"><span class="nv">}</span></div><div class="t" style="left:27.5px;top:532.8px;font-family:'Liberation Mono', monospace;font-size:15.3px;color:#6E5050;-webkit-text-stroke:0.3px currentColor">36</div><div class="m" style="left:133.6px;top:551.24px"><span class="pu">random</span><span class="nv"> = </span><span class="bl">Random</span><span class="nv">();</span></div><div style="position:absolute;left:7px;top:553.6px;width:12px;height:12px;background:#66CCFF;border-radius:50%"></div><div class="t" style="left:27.5px;top:553.2px;font-family:'Liberation Mono', monospace;font-size:15.3px;color:#6E5050;-webkit-text-stroke:0.3px currentColor">37</div><div class="m" style="left:133.6px;top:571.67px"><span class="pu">mem</span><span class="nv">-&gt;detailLen = </span><span class="pu">detailLen_1</span><span class="nv">;</span></div><div style="position:absolute;left:7px;top:574.1px;width:12px;height:12px;background:#66CCFF;border-radius:50%"></div><div class="t" style="left:27.5px;top:573.7px;font-family:'Liberation Mono', monospace;font-size:15.3px;color:#6E5050;-webkit-text-stroke:0.3px currentColor">38</div><div class="m" style="left:133.6px;top:592.10px"><span class="pu">mem</span><span class="nv">-&gt;detail = (</span><span class="ty">char *</span><span class="nv">)(</span><span class="pu">random</span><span class="nv"> ^ (</span><span class="ty">unsigned __int64</span><span class="nv">)</span><span class="pu">detail</span><span class="nv">);</span></div><div style="position:absolute;left:7px;top:594.5px;width:12px;height:12px;background:#66CCFF;border-radius:50%"></div><div class="t" style="left:27.5px;top:594.1px;font-family:'Liberation Mono', monospace;font-size:15.3px;color:#6E5050;-webkit-text-stroke:0.3px currentColor">39</div><div class="m" style="left:133.6px;top:612.53px"><span class="bl">printf</span><span class="nv">(</span><span class="gr">&quot;vulnerability rank(0-99999999999): &quot;</span><span class="nv">, </span><span class="pu">v0</span><span class="nv">);</span></div><div style="position:absolute;left:7px;top:614.9px;width:12px;height:12px;background:#66CCFF;border-radius:50%"></div><div class="t" style="left:27.5px;top:614.5px;font-family:'Liberation Mono', monospace;font-size:15.3px;color:#6E5050;-webkit-text-stroke:0.3px currentColor">40</div><div class="m" style="left:133.6px;top:632.96px"><span class="pu">v4</span><span class="nv"> = </span><span class="bl">get_num</span><span class="nv">();</span></div><div style="position:absolute;left:7px;top:635.4px;width:12px;height:12px;background:#66CCFF;border-radius:50%"></div><div class="t" style="left:27.5px;top:635.0px;font-family:'Liberation Mono', monospace;font-size:15.3px;color:#6E5050;-webkit-text-stroke:0.3px currentColor">41</div><div class="m" style="left:133.6px;top:653.39px"><span class="nv">if ( </span><span class="pu">v4</span><span class="nv"> &gt; 0 )</span></div><div style="position:absolute;left:7px;top:655.8px;width:12px;height:12px;background:#66CCFF;border-radius:50%"></div><div class="t" style="left:27.5px;top:655.4px;font-family:'Liberation Mono', monospace;font-size:15.3px;color:#6E5050;-webkit-text-stroke:0.3px currentColor">42</div><div class="m" style="left:154.0px;top:673.82px"><span class="pu">mem</span><span class="nv">-&gt;rank = </span><span class="pu">v4</span><span class="nv">;</span></div><div style="position:absolute;left:7px;top:676.2px;width:12px;height:12px;background:#66CCFF;border-radius:50%"></div><div class="t" style="left:27.5px;top:675.8px;font-family:'Liberation Mono', monospace;font-size:15.3px;color:#6E5050;-webkit-text-stroke:0.3px currentColor">43</div><div class="m" style="left:133.6px;top:694.25px"><span class="bl">table</span><span class="nv">[2 * </span><span class="pu">i</span><span class="nv"> + 3] = </span><span class="pu">random</span><span class="nv"> ^ (</span><span class="ty">unsigned __int64</span><span class="nv">)</span><span class="pu">mem</span><span class="nv">;</span></div><div style="position:absolute;left:7px;top:696.6px;width:12px;height:12px;background:#66CCFF;border-radius:50%"></div><div class="t" style="left:27.5px;top:696.2px;font-family:'Liberation Mono', monospace;font-size:15.3px;color:#6E5050;-webkit-text-stroke:0.3px currentColor">44</div><div class="m" style="left:133.6px;top:714.68px"><span class="bl">LODWORD</span><span class="nv">(</span><span class="bl">table</span><span class="nv">[2 * </span><span class="pu">i</span><span class="nv"> + 4]) = 1;</span></div><div style="position:absolute;left:7px;top:717.1px;width:12px;height:12px;background:#66CCFF;border-radius:50%"></div><div class="t" style="left:27.5px;top:716.7px;font-family:'Liberation Mono', monospace;font-size:15.3px;color:#6E5050;-webkit-text-stroke:0.3px currentColor">45</div><div class="m" style="left:133.6px;top:735.11px"><span class="bl">randomTable</span><span class="nv">[</span><span class="pu">i</span><span class="nv">] = </span><span class="pu">random</span><span class="nv">;</span></div><div style="position:absolute;left:7px;top:737.5px;width:12px;height:12px;background:#66CCFF;border-radius:50%"></div><div class="t" style="left:27.5px;top:737.1px;font-family:'Liberation Mono', monospace;font-size:15.3px;color:#6E5050;-webkit-text-stroke:0.3px currentColor">46</div><div class="m" style="left:133.6px;top:755.54px"><span class="nv">++</span><span class="bl">v_num</span><span class="nv">;</span></div><div style="position:absolute;left:7px;top:757.9px;width:12px;height:12px;background:#66CCFF;border-radius:50%"></div><div class="t" style="left:27.5px;top:757.5px;font-family:'Liberation Mono', monospace;font-size:15.3px;color:#6E5050;-webkit-text-stroke:0.3px currentColor">47</div><div class="m" style="left:133.6px;top:775.97px"><span class="nv">return;</span></div><div style="position:absolute;left:7px;top:778.4px;width:12px;height:12px;background:#66CCFF;border-radius:50%"></div><div class="t" style="left:27.5px;top:778.0px;font-family:'Liberation Mono', monospace;font-size:15.3px;color:#6E5050;-webkit-text-stroke:0.3px currentColor">48</div>
<div style="position:absolute;left:1002px;top:152px;width:628px;height:25px;background:#ECE9D8;border-top:1px solid #C9C6B4;border-bottom:1px solid #C9C6B4;border-left:1px solid #C9C6B4"></div><svg style="position:absolute;left:1007px;top:153px" width="22" height="22" viewBox="0 0 22 22"><path d="M4 1 L8 6 M18 1 L14 6 M1 9 L5 10 M21 9 L17 10 M2 20 L6 16 M20 20 L16 16" stroke="#111" stroke-width="1.2"/><ellipse cx="11" cy="12.5" rx="7.5" ry="8.5" fill="#B4502A"/><ellipse cx="8" cy="12" rx="2.5" ry="5.5" fill="#E0935A" opacity="0.8"/><ellipse cx="14" cy="12" rx="2.5" ry="5.5" fill="#E0935A" opacity="0.6"/><path d="M11 6 V21" stroke="#F0D0B0" stroke-width="1"/><ellipse cx="11" cy="5.5" rx="5.5" ry="2.8" fill="#2A1808"/></svg><div class="t" style="left:1034px;top:157.8px;font-family:'Liberation Mono', monospace;font-size:12.6px;line-height:14px;color:#000;transform:scaleY(1.16);transform-origin:0 0;">General registers</div><svg style="position:absolute;left:1560px;top:158px" width="12" height="12" viewBox="0 0 12 12"><rect x="1" y="1" width="10" height="10" fill="none" stroke="#000" stroke-width="1.3"/><rect x="1" y="1" width="10" height="1.5" fill="#000"/></svg><svg style="position:absolute;left:1587px;top:158px" width="12" height="12" viewBox="0 0 12 12"><rect x="4" y="1" width="7" height="6" fill="none" stroke="#000" stroke-width="1.2"/><rect x="4" y="1" width="7" height="2" fill="#000"/><rect x="1" y="5" width="7" height="6" fill="#ECE9D8" stroke="#000" stroke-width="1.2"/><rect x="1" y="5" width="7" height="2" fill="#000"/></svg><svg style="position:absolute;left:1612px;top:158px" width="12" height="12" viewBox="0 0 12 12"><path d="M1.5 1.5 L10.5 10.5 M10.5 1.5 L1.5 10.5" stroke="#000" stroke-width="1.6"/></svg>
<div style="position:absolute;left:1002px;top:180px;width:581px;height:297px;background:#C8FFFF;border-left:1px solid #8FA4C0;border-top:1px solid #8FA4C0;border-bottom:1px solid #8FA4C0"></div>
<div style="position:absolute;left:1562px;top:181px;width:21px;height:295px;background:linear-gradient(90deg,#EEEDE5,#FFFFFF)"></div><div style="position:absolute;left:1564px;top:183px;width:17px;height:19px;background:linear-gradient(135deg,#E2EBFE,#B6CAF5);border:1px solid #B3C6EE;border-radius:2px"><svg style="position:absolute;left:0px;top:0px" width="15" height="17" viewBox="0 0 15 17"><path d="M2.5 11 L7.5 6 L12.5 11" fill="none" stroke="#4D6185" stroke-width="2"/></svg></div><div style="position:absolute;left:1564px;top:455px;width:17px;height:19px;background:linear-gradient(135deg,#E2EBFE,#B6CAF5);border:1px solid #B3C6EE;border-radius:2px"><svg style="position:absolute;left:0px;top:0px" width="15" height="17" viewBox="0 0 15 17"><path d="M2.5 6 L7.5 11 L12.5 6" fill="none" stroke="#4D6185" stroke-width="2"/></svg></div><div style="position:absolute;left:1564px;top:203px;width:17px;height:167px;background:linear-gradient(90deg,#C9D8FC,#B4C8F6);border:1px solid #B5C8F0;border-radius:2px"></div><div style="position:absolute;left:1568px;top:283px;width:8px;height:1px;background:#EEF3FF"></div><div style="position:absolute;left:1568px;top:285px;width:8px;height:1px;background:#EEF3FF"></div><div style="position:absolute;left:1568px;top:287px;width:8px;height:1px;background:#EEF3FF"></div><div style="position:absolute;left:1568px;top:289px;width:8px;height:1px;background:#EEF3FF"></div>
<div style="position:absolute;left:1583px;top:180px;width:1px;height:297px;background:#8FA4C0"></div>
<div style="position:absolute;left:1586px;top:180px;width:44px;height:297px;background:#C8FFFF;border-left:1px solid #8FA4C0;border-top:1px solid #8FA4C0;border-bottom:1px solid #8FA4C0"></div>
<div class="m" style="left:1006px;top:186.0px;color:#0000FF">RAX</div>
<div class="m" style="left:1042px;top:186.0px;color:#000">0000000000000000</div>
<svg style="position:absolute;left:1217px;top:190px" width="14" height="14" viewBox="0 0 14 14"><path d="M2.5 1 V6 Q2.5 9.5 6 9.5 H8" fill="none" stroke="#8E8476" stroke-width="2.6"/><path d="M7.5 5 L13 9.5 L7.5 14 Z" fill="#8E8476"/></svg>
<div class="m" style="left:1006px;top:210.2px;color:#0000FF">RBX</div>
<div class="m" style="left:1042px;top:210.2px;color:#000">0000000000000000</div>
<svg style="position:absolute;left:1217px;top:214px" width="14" height="14" viewBox="0 0 14 14"><path d="M2.5 1 V6 Q2.5 9.5 6 9.5 H8" fill="none" stroke="#8E8476" stroke-width="2.6"/><path d="M7.5 5 L13 9.5 L7.5 14 Z" fill="#8E8476"/></svg>
<div class="m" style="left:1006px;top:234.5px;color:#0000FF">RCX</div>
<div class="m" style="left:1042px;top:234.5px;color:#000">0000000000000000</div>
<svg style="position:absolute;left:1217px;top:238px" width="14" height="14" viewBox="0 0 14 14"><path d="M2.5 1 V6 Q2.5 9.5 6 9.5 H8" fill="none" stroke="#8E8476" stroke-width="2.6"/><path d="M7.5 5 L13 9.5 L7.5 14 Z" fill="#8E8476"/></svg>
<div class="m" style="left:1006px;top:258.7px;color:#0000FF">RDX</div>
<div class="m" style="left:1042px;top:258.7px;color:#000">0000000000000000</div>
<svg style="position:absolute;left:1217px;top:263px" width="14" height="14" viewBox="0 0 14 14"><path d="M2.5 1 V6 Q2.5 9.5 6 9.5 H8" fill="none" stroke="#8E8476" stroke-width="2.6"/><path d="M7.5 5 L13 9.5 L7.5 14 Z" fill="#8E8476"/></svg>
<div class="m" style="left:1006px;top:283.0px;color:#0000FF">RSI</div>
<div class="m" style="left:1042px;top:283.0px;color:#000">0000000000000000</div>
<svg style="position:absolute;left:1217px;top:287px" width="14" height="14" viewBox="0 0 14 14"><path d="M2.5 1 V6 Q2.5 9.5 6 9.5 H8" fill="none" stroke="#8E8476" stroke-width="2.6"/><path d="M7.5 5 L13 9.5 L7.5 14 Z" fill="#8E8476"/></svg>
<div class="m" style="left:1006px;top:307.2px;color:#0000FF">RDI</div>
<div class="m" style="left:1042px;top:307.2px;color:#000">0000000000000068</div>
<svg style="position:absolute;left:1217px;top:311px" width="14" height="14" viewBox="0 0 14 14"><path d="M2.5 1 V6 Q2.5 9.5 6 9.5 H8" fill="none" stroke="#8E8476" stroke-width="2.6"/><path d="M7.5 5 L13 9.5 L7.5 14 Z" fill="#8E8476"/></svg>
<div class="m" style="left:1006px;top:331.4px;color:#0000FF">RBP</div>
<div class="m" style="left:1042px;top:331.4px;color:#000">00007FFFFFFFE250</div>
<svg style="position:absolute;left:1217px;top:335px" width="14" height="14" viewBox="0 0 14 14"><path d="M2.5 1 V6 Q2.5 9.5 6 9.5 H8" fill="none" stroke="#2A5FD0" stroke-width="2.6"/><path d="M7.5 5 L13 9.5 L7.5 14 Z" fill="#2A5FD0"/></svg>
<div class="m" style="left:1240px;top:331.4px"><span style="color:#8A7A00">[stack]:00007FFFFFFFE250</span></div>
<div class="m" style="left:1006px;top:355.7px;color:#0000FF">RSP</div>
<div class="m" style="left:1042px;top:355.7px;color:#000">00007FFFFFFFE220</div>
<svg style="position:absolute;left:1217px;top:360px" width="14" height="14" viewBox="0 0 14 14"><path d="M2.5 1 V6 Q2.5 9.5 6 9.5 H8" fill="none" stroke="#2A5FD0" stroke-width="2.6"/><path d="M7.5 5 L13 9.5 L7.5 14 Z" fill="#2A5FD0"/></svg>
<div class="m" style="left:1240px;top:355.7px"><span style="color:#8A7A00">[stack]:00007FFFFFFFE220</span></div>
<div class="m" style="left:1006px;top:379.9px;color:#0000FF">RIP</div>
<div class="m" style="left:1042px;top:379.9px;color:#000">0000000000400D6F</div>
<svg style="position:absolute;left:1217px;top:384px" width="14" height="14" viewBox="0 0 14 14"><path d="M2.5 1 V6 Q2.5 9.5 6 9.5 H8" fill="none" stroke="#2A5FD0" stroke-width="2.6"/><path d="M7.5 5 L13 9.5 L7.5 14 Z" fill="#2A5FD0"/></svg>
<div class="m" style="left:1240px;top:379.9px"><span style="color:#0000FF">add+7C</span></div>
<div class="m" style="left:1006px;top:404.2px;color:#0000FF">R8</div>
<div class="m" style="left:1042px;top:404.2px;color:#000">00007FFFF7DD6500</div>
<svg style="position:absolute;left:1217px;top:408px" width="14" height="14" viewBox="0 0 14 14"><path d="M2.5 1 V6 Q2.5 9.5 6 9.5 H8" fill="none" stroke="#2A5FD0" stroke-width="2.6"/><path d="M7.5 5 L13 9.5 L7.5 14 Z" fill="#2A5FD0"/></svg>
<div class="m" style="left:1240px;top:404.2px"><span style="color:#8A7A00">libc_2.21.so:</span><span style="color:#000080">__progname_full+48</span></div>
<div class="m" style="left:1006px;top:428.4px;color:#0000FF">R9</div>
<div class="m" style="left:1042px;top:428.4px;color:#000">0000000000000002</div>
<svg style="position:absolute;left:1217px;top:432px" width="14" height="14" viewBox="0 0 14 14"><path d="M2.5 1 V6 Q2.5 9.5 6 9.5 H8" fill="none" stroke="#8E8476" stroke-width="2.6"/><path d="M7.5 5 L13 9.5 L7.5 14 Z" fill="#8E8476"/></svg>
<div class="m" style="left:1006px;top:452.6px;color:#0000FF">R10</div>
<div class="m" style="left:1042px;top:452.6px;color:#000">000000000000000A</div>
<svg style="position:absolute;left:1217px;top:457px" width="14" height="14" viewBox="0 0 14 14"><path d="M2.5 1 V6 Q2.5 9.5 6 9.5 H8" fill="none" stroke="#8E8476" stroke-width="2.6"/><path d="M7.5 5 L13 9.5 L7.5 14 Z" fill="#8E8476"/></svg>
<div class="m" style="left:1590px;top:184.0px;color:#0000FF">OF</div>
<div class="m" style="left:1615px;top:184.0px;color:#000">0</div>
<div class="m" style="left:1590px;top:204.5px;color:#0000FF">DF</div>
<div class="m" style="left:1615px;top:204.5px;color:#000">0</div>
<div class="m" style="left:1590px;top:225.0px;color:#0000FF">IF</div>
<div class="m" style="left:1615px;top:225.0px;color:#000">1</div>
<div class="m" style="left:1590px;top:245.5px;color:#0000FF">TF</div>
<div class="m" style="left:1615px;top:245.5px;color:#000">0</div>
<div class="m" style="left:1590px;top:266.0px;color:#0000FF">SF</div>
<div class="m" style="left:1615px;top:266.0px;color:#000">0</div>
<div class="m" style="left:1590px;top:286.5px;color:#0000FF">ZF</div>
<div class="m" style="left:1615px;top:286.5px;color:#000">1</div>
<div class="m" style="left:1590px;top:307.0px;color:#0000FF">AF</div>
<div class="m" style="left:1615px;top:307.0px;color:#000">0</div>
<div class="m" style="left:1590px;top:327.5px;color:#0000FF">PF</div>
<div class="m" style="left:1615px;top:327.5px;color:#000">1</div>
<div class="m" style="left:1590px;top:348.0px;color:#0000FF">CF</div>
<div class="m" style="left:1615px;top:348.0px;color:#000">0</div>
<div style="position:absolute;left:1002px;top:483px;width:628px;height:24px;background:#ECE9D8;border-top:1px solid #C9C6B4;border-bottom:1px solid #C9C6B4;border-left:1px solid #C9C6B4"></div><svg style="position:absolute;left:1008px;top:485px" width="21" height="20" viewBox="0 0 21 20"><rect x="5" y="1" width="15" height="17" fill="#EAF4FC" stroke="#2F6FD8"/><rect x="5" y="1" width="15" height="3" fill="#2F7FE8"/><rect x="1" y="9" width="9" height="10" fill="#EAF4FC" stroke="#2D4E8A"/><rect x="12" y="7" width="5" height="8" fill="none" stroke="#2D4E8A"/><path d="M3 13h5M3 16h5" stroke="#2D4E8A"/></svg><div class="t" style="left:1035px;top:488.8px;font-family:'Liberation Mono', monospace;font-size:12.6px;line-height:14px;color:#000;transform:scaleY(1.16);transform-origin:0 0;">Modules</div><svg style="position:absolute;left:1560px;top:489px" width="12" height="12" viewBox="0 0 12 12"><rect x="1" y="1" width="10" height="10" fill="none" stroke="#000" stroke-width="1.3"/><rect x="1" y="1" width="10" height="1.5" fill="#000"/></svg><svg style="position:absolute;left:1587px;top:489px" width="12" height="12" viewBox="0 0 12 12"><rect x="4" y="1" width="7" height="6" fill="none" stroke="#000" stroke-width="1.2"/><rect x="4" y="1" width="7" height="2" fill="#000"/><rect x="1" y="5" width="7" height="6" fill="#ECE9D8" stroke="#000" stroke-width="1.2"/><rect x="1" y="5" width="7" height="2" fill="#000"/></svg><svg style="position:absolute;left:1612px;top:489px" width="12" height="12" viewBox="0 0 12 12"><path d="M1.5 1.5 L10.5 10.5 M10.5 1.5 L1.5 10.5" stroke="#000" stroke-width="1.6"/></svg>
<div style="position:absolute;left:1002px;top:510px;width:628px;height:80px;background:#fff;border-left:1px solid #8FA4C0;border-top:1px solid #8FA4C0;border-bottom:1px solid #8FA4C0"></div>
<div style="position:absolute;left:1003px;top:511px;width:610px;height:25px;background:#ECE9D8;border-bottom:2px solid #D6D2BE"></div>
<div style="position:absolute;left:1008px;top:515px;width:1px;height:18px;background:#C9C6B4"></div>
<div style="position:absolute;left:1434px;top:515px;width:1px;height:18px;background:#C9C6B4"></div>
<div class="t" style="left:1013px;top:519.3px;font-family:'Liberation Mono', monospace;font-size:12.6px;line-height:14px;color:#000;transform:scaleY(1.16);transform-origin:0 0;">Path</div>
<div class="t" style="left:1440px;top:519.3px;font-family:'Liberation Mono', monospace;font-size:12.6px;line-height:14px;color:#000;transform:scaleY(1.16);transform-origin:0 0;">Base</div>
<div style="position:absolute;left:1003px;top:536px;width:5px;height:32px;background:#ECE9D8"></div>
<svg style="position:absolute;left:1012px;top:537px" width="21" height="20" viewBox="0 0 21 20"><rect x="5" y="1" width="15" height="17" fill="#EAF4FC" stroke="#2F6FD8"/><rect x="5" y="1" width="15" height="3" fill="#2F7FE8"/><rect x="1" y="9" width="9" height="10" fill="#EAF4FC" stroke="#2D4E8A"/><rect x="12" y="7" width="5" height="8" fill="none" stroke="#2D4E8A"/></svg>
<div class="t" style="left:1040px;top:541.3px;font-family:'Liberation Mono', monospace;font-size:12.6px;line-height:14px;color:#000;transform:scaleY(1.16);transform-origin:0 0;">/root/Desktop/baimao---pwn-master/baimao---pwn-ma···</div>
<div class="t" style="left:1440px;top:541.3px;font-family:'Liberation Mono', monospace;font-size:12.6px;line-height:14px;color:#000;transform:scaleY(1.16);transform-origin:0 0;">0000000000400000</div>
<div style="position:absolute;left:1008px;top:557px;width:604px;height:10px;overflow:hidden"><svg style="position:absolute;left:4px;top:1px" width="21" height="20" viewBox="0 0 21 20"><rect x="5" y="1" width="15" height="17" fill="#EAF4FC" stroke="#2F6FD8"/><rect x="5" y="1" width="15" height="3" fill="#2F7FE8"/></svg><div class="t" style="left:32px;top:4.3px;font-family:'Liberation Mono', monospace;font-size:12.6px;line-height:14px;color:#000;transform:scaleY(1.16);transform-origin:0 0;">/lib/x86_64-linux-gnu/libc-2.21.so</div><div class="t" style="left:432px;top:4.3px;font-family:'Liberation Mono', monospace;font-size:12.6px;line-height:14px;color:#000;transform:scaleY(1.16);transform-origin:0 0;">00007FFFF7A27000</div></div>
<div style="position:absolute;left:1003px;top:568px;width:607px;height:20px;background:linear-gradient(#EEEDE5,#FFFFFF)"></div><div style="position:absolute;left:1005px;top:569px;width:18px;height:18px;background:linear-gradient(135deg,#E2EBFE,#B6CAF5);border:1px solid #B3C6EE;border-radius:2px"><svg style="position:absolute;left:0px;top:0px" width="16" height="16" viewBox="0 0 16 16"><path d="M10 3.0 L5 8.0 L10 13.0" fill="none" stroke="#4D6185" stroke-width="2"/></svg></div><div style="position:absolute;left:1590px;top:569px;width:18px;height:18px;background:linear-gradient(135deg,#E2EBFE,#B6CAF5);border:1px solid #B3C6EE;border-radius:2px"><svg style="position:absolute;left:0px;top:0px" width="16" height="16" viewBox="0 0 16 16"><path d="M6 3.0 L11 8.0 L6 13.0" fill="none" stroke="#4D6185" stroke-width="2"/></svg></div><div style="position:absolute;left:1024px;top:569px;width:427px;height:18px;background:linear-gradient(#C9D8FC,#B4C8F6);border:1px solid #B5C8F0;border-radius:2px"></div><div style="position:absolute;left:1234px;top:574px;width:1px;height:8px;background:#EEF3FF"></div><div style="position:absolute;left:1236px;top:574px;width:1px;height:8px;background:#EEF3FF"></div><div style="position:absolute;left:1238px;top:574px;width:1px;height:8px;background:#EEF3FF"></div><div style="position:absolute;left:1240px;top:574px;width:1px;height:8px;background:#EEF3FF"></div>
<div style="position:absolute;left:1610px;top:568px;width:20px;height:21px;background:#ECE9D8"></div>
<div style="position:absolute;left:1612px;top:511px;width:18px;height:57px;background:linear-gradient(90deg,#EEEDE5,#FFFFFF)"></div><div style="position:absolute;left:1614px;top:513px;width:14px;height:19px;background:linear-gradient(135deg,#E2EBFE,#B6CAF5);border:1px solid #B3C6EE;border-radius:2px"><svg style="position:absolute;left:0px;top:0px" width="12" height="17" viewBox="0 0 12 17"><path d="M1.0 11 L6.0 6 L11.0 11" fill="none" stroke="#4D6185" stroke-width="2"/></svg></div><div style="position:absolute;left:1614px;top:547px;width:14px;height:19px;background:linear-gradient(135deg,#E2EBFE,#B6CAF5);border:1px solid #B3C6EE;border-radius:2px"><svg style="position:absolute;left:0px;top:0px" width="12" height="17" viewBox="0 0 12 17"><path d="M1.0 6 L6.0 11 L11.0 6" fill="none" stroke="#4D6185" stroke-width="2"/></svg></div><div style="position:absolute;left:1614px;top:535px;width:14px;height:9px;background:linear-gradient(90deg,#C9D8FC,#B4C8F6);border:1px solid #B5C8F0;border-radius:2px"></div><div style="position:absolute;left:1617px;top:536px;width:8px;height:1px;background:#EEF3FF"></div><div style="position:absolute;left:1617px;top:538px;width:8px;height:1px;background:#EEF3FF"></div><div style="position:absolute;left:1617px;top:540px;width:8px;height:1px;background:#EEF3FF"></div><div style="position:absolute;left:1617px;top:542px;width:8px;height:1px;background:#EEF3FF"></div>
<div style="position:absolute;left:1004px;top:618px;width:206px;height:28px;background:linear-gradient(#FFFFFF,#F3F2EC 60%,#EBE9E0);border:1px solid #9AAFC4;border-bottom:none;border-radius:4px 4px 0 0"></div>
<svg style="position:absolute;left:1017px;top:621px" width="20" height="20" viewBox="0 0 20 20"><rect x="1" y="1" width="18" height="18" fill="#EAF4FC" stroke="#2F6FD8"/><rect x="1" y="1" width="18" height="2" fill="#2F7FE8"/><rect x="4" y="5" width="7" height="7" fill="none" stroke="#23448A"/><rect x="8" y="9" width="7" height="7" fill="#EAF4FC" stroke="#23448A"/></svg>
<div class="t" style="left:1079px;top:626.3px;font-family:'Liberation Mono', monospace;font-size:12.6px;line-height:14px;color:#000;transform:scaleY(1.16);transform-origin:0 0;">Threads</div>
<div style="position:absolute;left:1177px;top:623px;width:17px;height:17px;background:#C6C4B6;border:1px solid #B0AE9F;border-radius:3px"><svg style="position:absolute;left:0px;top:0px" width="15" height="15" viewBox="0 0 15 15"><path d="M4 4 L11 11 M11 4 L4 11" stroke="#FFFDF0" stroke-width="2.4"/></svg></div>
<div style="position:absolute;left:1211px;top:615px;width:211px;height:31px;background:#FBFBFD;border-top:3px solid #F5A623;border-radius:3px 3px 0 0;border-right:1px solid #AFBFCF"></div>
<svg style="position:absolute;left:1227px;top:620px" width="20" height="20" viewBox="0 0 20 20"><rect x="1" y="1" width="18" height="18" fill="#F4FAFF" stroke="#2F6FD8"/><rect x="1" y="1" width="18" height="3" fill="#2F7FE8"/><path d="M13 5 Q9 4 9 9 L8 14 Q7 17 5 17 M7 10 h5" fill="none" stroke="#111" stroke-width="1.4"/></svg>
<div class="t" style="left:1255px;top:625.3px;font-family:'Liberation Mono', monospace;font-size:12.6px;line-height:14px;color:#000;transform:scaleY(1.16);transform-origin:0 0;">Functions window</div>
<div style="position:absolute;left:1388px;top:622px;width:17px;height:17px;background:linear-gradient(#F08A70,#D8472E);border:1px solid #C0402A;border-radius:3px"><svg style="position:absolute;left:0px;top:0px" width="15" height="15" viewBox="0 0 15 15"><path d="M4 4 L11 11 M11 4 L4 11" stroke="#fff" stroke-width="2.4"/></svg></div>
<div style="position:absolute;left:1002px;top:645px;width:628px;height:171px;background:#fff;border-left:1px solid #8FA4C0;border-top:1px solid #8FA4C0;border-bottom:1px solid #8FA4C0"></div>
<div style="position:absolute;left:1003px;top:646px;width:610px;height:26px;background:#ECE9D8;border-bottom:2px solid #D6D2BE"></div>
<div style="position:absolute;left:1008px;top:650px;width:1px;height:18px;background:#C9C6B4"></div>
<div style="position:absolute;left:1350px;top:650px;width:1px;height:18px;background:#C9C6B4"></div>
<div style="position:absolute;left:1453px;top:650px;width:1px;height:18px;background:#C9C6B4"></div>
<div class="t" style="left:1013px;top:653.8px;font-family:'Liberation Mono', monospace;font-size:12.6px;line-height:14px;color:#000;transform:scaleY(1.16);transform-origin:0 0;">Function name</div>
<div class="t" style="left:1358px;top:653.8px;font-family:'Liberation Mono', monospace;font-size:12.6px;line-height:14px;color:#000;transform:scaleY(1.16);transform-origin:0 0;">Segment</div>
<div class="t" style="left:1459px;top:653.8px;font-family:'Liberation Mono', monospace;font-size:12.6px;line-height:14px;color:#000;transform:scaleY(1.16);transform-origin:0 0;">Start</div>
<div style="position:absolute;left:1003px;top:672px;width:5px;height:124px;background:#ECE9D8"></div>
<svg style="position:absolute;left:1012px;top:673px" width="20" height="20" viewBox="0 0 20 20"><rect x="1" y="1" width="18" height="18" fill="#F4FAFF" stroke="#2F6FD8"/><rect x="1" y="1" width="18" height="3" fill="#2F7FE8"/><path d="M13 5 Q9 4 9 9 L8 14 Q7 17 5 17 M7 10 h5" fill="none" stroke="#111" stroke-width="1.4"/></svg>
<div class="t" style="left:1040px;top:678.3px;font-family:'Liberation Mono', monospace;font-size:12.6px;line-height:14px;color:#000;transform:scaleY(1.16);transform-origin:0 0;">Random</div>
<div class="t" style="left:1356px;top:678.3px;font-family:'Liberation Mono', monospace;font-size:12.6px;line-height:14px;color:#000;transform:scaleY(1.16);transform-origin:0 0;">.text</div>
<div class="t" style="left:1459px;top:678.3px;font-family:'Liberation Mono', monospace;font-size:12.6px;line-height:14px;color:#000;transform:scaleY(1.16);transform-origin:0 0;">0000000000400ACE</div>
<svg style="position:absolute;left:1012px;top:693px" width="20" height="20" viewBox="0 0 20 20"><rect x="1" y="1" width="18" height="18" fill="#F4FAFF" stroke="#2F6FD8"/><rect x="1" y="1" width="18" height="3" fill="#2F7FE8"/><path d="M13 5 Q9 4 9 9 L8 14 Q7 17 5 17 M7 10 h5" fill="none" stroke="#111" stroke-width="1.4"/></svg>
<div class="t" style="left:1040px;top:698.3px;font-family:'Liberation Mono', monospace;font-size:12.6px;line-height:14px;color:#000;transform:scaleY(1.16);transform-origin:0 0;font-weight:bold;letter-spacing:1.45px">get_str</div>
<div class="t" style="left:1356px;top:698.3px;font-family:'Liberation Mono', monospace;font-size:12.6px;line-height:14px;color:#000;transform:scaleY(1.16);transform-origin:0 0;font-weight:bold;letter-spacing:1.45px">.text</div>
<div class="t" style="left:1459px;top:698.3px;font-family:'Liberation Mono', monospace;font-size:12.6px;line-height:14px;color:#000;transform:scaleY(1.16);transform-origin:0 0;font-weight:bold;letter-spacing:1.45px">0000000000400B41</div>
<svg style="position:absolute;left:1012px;top:714px" width="20" height="20" viewBox="0 0 20 20"><rect x="1" y="1" width="18" height="18" fill="#F4FAFF" stroke="#2F6FD8"/><rect x="1" y="1" width="18" height="3" fill="#2F7FE8"/><path d="M13 5 Q9 4 9 9 L8 14 Q7 17 5 17 M7 10 h5" fill="none" stroke="#111" stroke-width="1.4"/></svg>
<div class="t" style="left:1040px;top:719.3px;font-family:'Liberation Mono', monospace;font-size:12.6px;line-height:14px;color:#000;transform:scaleY(1.16);transform-origin:0 0;">get_num</div>
<div class="t" style="left:1356px;top:719.3px;font-family:'Liberation Mono', monospace;font-size:12.6px;line-height:14px;color:#000;transform:scaleY(1.16);transform-origin:0 0;">.text</div>
<div class="t" style="left:1459px;top:719.3px;font-family:'Liberation Mono', monospace;font-size:12.6px;line-height:14px;color:#000;transform:scaleY(1.16);transform-origin:0 0;">0000000000400BB6</div>
<svg style="position:absolute;left:1012px;top:734px" width="20" height="20" viewBox="0 0 20 20"><rect x="1" y="1" width="18" height="18" fill="#F4FAFF" stroke="#2F6FD8"/><rect x="1" y="1" width="18" height="3" fill="#2F7FE8"/><path d="M13 5 Q9 4 9 9 L8 14 Q7 17 5 17 M7 10 h5" fill="none" stroke="#111" stroke-width="1.4"/></svg>
<div class="t" style="left:1040px;top:739.3px;font-family:'Liberation Mono', monospace;font-size:12.6px;line-height:14px;color:#000;transform:scaleY(1.16);transform-origin:0 0;">check</div>
<div class="t" style="left:1356px;top:739.3px;font-family:'Liberation Mono', monospace;font-size:12.6px;line-height:14px;color:#000;transform:scaleY(1.16);transform-origin:0 0;">.text</div>
<div class="t" style="left:1459px;top:739.3px;font-family:'Liberation Mono', monospace;font-size:12.6px;line-height:14px;color:#000;transform:scaleY(1.16);transform-origin:0 0;">0000000000400C25</div>
<svg style="position:absolute;left:1012px;top:755px" width="20" height="20" viewBox="0 0 20 20"><rect x="1" y="1" width="18" height="18" fill="#F4FAFF" stroke="#2F6FD8"/><rect x="1" y="1" width="18" height="3" fill="#2F7FE8"/><path d="M13 5 Q9 4 9 9 L8 14 Q7 17 5 17 M7 10 h5" fill="none" stroke="#111" stroke-width="1.4"/></svg>
<div class="t" style="left:1040px;top:760.3px;font-family:'Liberation Mono', monospace;font-size:12.6px;line-height:14px;color:#000;transform:scaleY(1.16);transform-origin:0 0;">Register</div>
<div class="t" style="left:1356px;top:760.3px;font-family:'Liberation Mono', monospace;font-size:12.6px;line-height:14px;color:#000;transform:scaleY(1.16);transform-origin:0 0;">.text</div>
<div class="t" style="left:1459px;top:760.3px;font-family:'Liberation Mono', monospace;font-size:12.6px;line-height:14px;color:#000;transform:scaleY(1.16);transform-origin:0 0;">0000000000400C7B</div>
<div style="position:absolute;left:1008px;top:774px;width:605px;height:20px;background:#ECE9D8"></div>
<svg style="position:absolute;left:1012px;top:775px" width="20" height="20" viewBox="0 0 20 20"><rect x="1" y="1" width="18" height="18" fill="#F4FAFF" stroke="#2F6FD8"/><rect x="1" y="1" width="18" height="3" fill="#2F7FE8"/><path d="M13 5 Q9 4 9 9 L8 14 Q7 17 5 17 M7 10 h5" fill="none" stroke="#111" stroke-width="1.4"/></svg>
<div class="t" style="left:1040px;top:780.3px;font-family:'Liberation Mono', monospace;font-size:12.6px;line-height:14px;color:#000;transform:scaleY(1.16);transform-origin:0 0;">add</div>
<div class="t" style="left:1356px;top:780.3px;font-family:'Liberation Mono', monospace;font-size:12.6px;line-height:14px;color:#000;transform:scaleY(1.16);transform-origin:0 0;">.text</div>
<div class="t" style="left:1459px;top:780.3px;font-family:'Liberation Mono', monospace;font-size:12.6px;line-height:14px;color:#000;transform:scaleY(1.16);transform-origin:0 0;">0000000000400CF3</div>
<div style="position:absolute;left:1003px;top:795px;width:610px;height:20px;background:#fff"></div>
<div style="position:absolute;left:1003px;top:795px;width:607px;height:20px;background:linear-gradient(#EEEDE5,#FFFFFF)"></div><div style="position:absolute;left:1005px;top:796px;width:18px;height:18px;background:linear-gradient(135deg,#E2EBFE,#B6CAF5);border:1px solid #B3C6EE;border-radius:2px"><svg style="position:absolute;left:0px;top:0px" width="16" height="16" viewBox="0 0 16 16"><path d="M10 3.0 L5 8.0 L10 13.0" fill="none" stroke="#4D6185" stroke-width="2"/></svg></div><div style="position:absolute;left:1590px;top:796px;width:18px;height:18px;background:linear-gradient(135deg,#E2EBFE,#B6CAF5);border:1px solid #B3C6EE;border-radius:2px"><svg style="position:absolute;left:0px;top:0px" width="16" height="16" viewBox="0 0 16 16"><path d="M6 3.0 L11 8.0 L6 13.0" fill="none" stroke="#4D6185" stroke-width="2"/></svg></div><div style="position:absolute;left:1024px;top:796px;width:298px;height:18px;background:linear-gradient(#C9D8FC,#B4C8F6);border:1px solid #B5C8F0;border-radius:2px"></div><div style="position:absolute;left:1170px;top:801px;width:1px;height:8px;background:#EEF3FF"></div><div style="position:absolute;left:1172px;top:801px;width:1px;height:8px;background:#EEF3FF"></div><div style="position:absolute;left:1174px;top:801px;width:1px;height:8px;background:#EEF3FF"></div><div style="position:absolute;left:1176px;top:801px;width:1px;height:8px;background:#EEF3FF"></div>
<div style="position:absolute;left:1610px;top:795px;width:20px;height:20px;background:#ECE9D8"></div>
<div style="position:absolute;left:1612px;top:646px;width:18px;height:149px;background:linear-gradient(90deg,#EEEDE5,#FFFFFF)"></div><div style="position:absolute;left:1614px;top:648px;width:14px;height:19px;background:linear-gradient(135deg,#E2EBFE,#B6CAF5);border:1px solid #B3C6EE;border-radius:2px"><svg style="position:absolute;left:0px;top:0px" width="12" height="17" viewBox="0 0 12 17"><path d="M1.0 11 L6.0 6 L11.0 11" fill="none" stroke="#4D6185" stroke-width="2"/></svg></div><div style="position:absolute;left:1614px;top:774px;width:14px;height:19px;background:linear-gradient(135deg,#E2EBFE,#B6CAF5);border:1px solid #B3C6EE;border-radius:2px"><svg style="position:absolute;left:0px;top:0px" width="12" height="17" viewBox="0 0 12 17"><path d="M1.0 6 L6.0 11 L11.0 6" fill="none" stroke="#4D6185" stroke-width="2"/></svg></div><div style="position:absolute;left:1614px;top:712px;width:14px;height:9px;background:linear-gradient(90deg,#C9D8FC,#B4C8F6);border:1px solid #B5C8F0;border-radius:2px"></div><div style="position:absolute;left:1617px;top:713px;width:8px;height:1px;background:#EEF3FF"></div><div style="position:absolute;left:1617px;top:715px;width:8px;height:1px;background:#EEF3FF"></div><div style="position:absolute;left:1617px;top:717px;width:8px;height:1px;background:#EEF3FF"></div><div style="position:absolute;left:1617px;top:719px;width:8px;height:1px;background:#EEF3FF"></div>
<div class="t" style="left:1009px;top:820.3px;font-family:'Liberation Mono', monospace;font-size:12.6px;line-height:14px;color:#000;transform:scaleY(1.16);transform-origin:0 0;">Line 32 of 60</div>
<div style="position:absolute;left:997px;top:150px;width:1px;height:690px;background:#8FA4C0"></div>
<div style="position:absolute;left:0px;top:843px;width:1035px;height:25px;background:#ECE9D8;border-top:1px solid #C9C6B4;border-bottom:1px solid #C9C6B4;border-left:1px solid #C9C6B4"></div><svg style="position:absolute;left:7px;top:846px" width="18" height="18" viewBox="0 0 18 18"><rect x="1" y="1" width="16" height="16" fill="#EAF4FC" stroke="#2F6FD8"/><rect x="1" y="1" width="16" height="2" fill="#2F7FE8"/><path d="M9 5 L13 7.5 L13 12 L9 14.5 L5 12 L5 7.5 Z" fill="none" stroke="#4040E0" stroke-width="1.2"/></svg><div class="t" style="left:32px;top:848.8px;font-family:'Liberation Mono', monospace;font-size:12.6px;line-height:14px;color:#000;transform:scaleY(1.16);transform-origin:0 0;">Hex View-1</div><svg style="position:absolute;left:965px;top:849px" width="12" height="12" viewBox="0 0 12 12"><rect x="1" y="1" width="10" height="10" fill="none" stroke="#000" stroke-width="1.3"/><rect x="1" y="1" width="10" height="1.5" fill="#000"/></svg><svg style="position:absolute;left:992px;top:849px" width="12" height="12" viewBox="0 0 12 12"><rect x="4" y="1" width="7" height="6" fill="none" stroke="#000" stroke-width="1.2"/><rect x="4" y="1" width="7" height="2" fill="#000"/><rect x="1" y="5" width="7" height="6" fill="#ECE9D8" stroke="#000" stroke-width="1.2"/><rect x="1" y="5" width="7" height="2" fill="#000"/></svg><svg style="position:absolute;left:1017px;top:849px" width="12" height="12" viewBox="0 0 12 12"><path d="M1.5 1.5 L10.5 10.5 M10.5 1.5 L1.5 10.5" stroke="#000" stroke-width="1.6"/></svg>
<div style="position:absolute;left:0px;top:871px;width:1035px;height:228px;background:#C8FFFF;border-top:1px solid #8FA4C0;border-bottom:1px solid #8FA4C0;border-right:1px solid #8FA4C0"></div>
<div style="position:absolute;left:0px;top:1072px;width:1013px;height:26px;background:#ECE9D8"></div>
<div class="t" style="left:1px;top:1077.5px;font-family:'Liberation Mono', monospace;font-size:14.95px;line-height:16px;color:#111;transform:scaleY(1.1);transform-origin:0 0">UNKNOWN</div>
<div class="t" style="left:71px;top:1077.5px;font-family:'Liberation Mono', monospace;font-size:14.95px;line-height:16px;color:#111;transform:scaleY(1.1);transform-origin:0 0">00000000006040F0: [heap]:006040F0</div>
<div style="position:absolute;left:65px;top:1075px;width:1px;height:20px;background:#C9C6B4"></div>
<div style="position:absolute;left:66px;top:1075px;width:1px;height:20px;background:#fff"></div>
<div style="position:absolute;left:368px;top:1075px;width:1px;height:20px;background:#C9C6B4"></div>
<div style="position:absolute;left:369px;top:1075px;width:1px;height:20px;background:#fff"></div>
<div style="position:absolute;left:383px;top:1075px;width:1px;height:20px;background:#C9C6B4"></div>
<div style="position:absolute;left:384px;top:1075px;width:1px;height:20px;background:#fff"></div>
<div style="position:absolute;left:1013px;top:872px;width:21px;height:226px;background:linear-gradient(90deg,#EEEDE5,#FFFFFF)"></div><div style="position:absolute;left:1015px;top:874px;width:17px;height:19px;background:linear-gradient(135deg,#E2EBFE,#B6CAF5);border:1px solid #B3C6EE;border-radius:2px"><svg style="position:absolute;left:0px;top:0px" width="15" height="17" viewBox="0 0 15 17"><path d="M2.5 11 L7.5 6 L12.5 11" fill="none" stroke="#4D6185" stroke-width="2"/></svg></div><div style="position:absolute;left:1015px;top:1077px;width:17px;height:19px;background:linear-gradient(135deg,#E2EBFE,#B6CAF5);border:1px solid #B3C6EE;border-radius:2px"><svg style="position:absolute;left:0px;top:0px" width="15" height="17" viewBox="0 0 15 17"><path d="M2.5 6 L7.5 11 L12.5 6" fill="none" stroke="#4D6185" stroke-width="2"/></svg></div><div style="position:absolute;left:1015px;top:894px;width:17px;height:9px;background:linear-gradient(90deg,#C9D8FC,#B4C8F6);border:1px solid #B5C8F0;border-radius:2px"></div><div style="position:absolute;left:1019px;top:895px;width:8px;height:1px;background:#EEF3FF"></div><div style="position:absolute;left:1019px;top:897px;width:8px;height:1px;background:#EEF3FF"></div><div style="position:absolute;left:1019px;top:899px;width:8px;height:1px;background:#EEF3FF"></div><div style="position:absolute;left:1019px;top:901px;width:8px;height:1px;background:#EEF3FF"></div>
<div class="m" style="left:3px;top:873.5px;color:#7A6A62">006040A0</div>
<div class="m" style="left:105px;top:873.5px;color:#000080">01 00 00 00 00 00 00 00</div>
<div class="m" style="left:360px;top:873.5px;color:#000080">02 00 00 00 00 00 00 00</div>
<div class="m" style="left:615px;top:873.5px;color:#0000FF">................</div>
<div class="m" style="left:3px;top:893.9px;color:#7A6A62">006040B0</div>
<div class="m" style="left:105px;top:893.9px;color:#000080">08 00 00 00 00 00 00 00</div>
<div class="m" style="left:360px;top:893.9px;color:#000080">62 62 00 00 00 00 00 00</div>
<div class="m" style="left:615px;top:893.9px;color:#0000FF">........bb......</div>
<div class="m" style="left:3px;top:914.3px;color:#7A6A62">006040C0</div>
<div class="m" style="left:105px;top:914.3px;color:#000080">00 00 00 00 00 00 00 00</div>
<div class="m" style="left:360px;top:914.3px;color:#000080">00 00 00 00 00 00 00 00</div>
<div class="m" style="left:615px;top:914.3px;color:#0000FF">................</div>
<div class="m" style="left:3px;top:934.6px;color:#7A6A62">006040D0</div>
<div class="m" style="left:105px;top:934.6px;color:#000080">00 00 00 00 00 00 00 00</div>
<div class="m" style="left:360px;top:934.6px;color:#000080">00 00 00 00 00 00 00 00</div>
<div class="m" style="left:615px;top:934.6px;color:#0000FF">................</div>
<div class="m" style="left:3px;top:955.0px;color:#7A6A62">006040E0</div>
<div class="m" style="left:105px;top:955.0px;color:#000080">00 00 00 00 00 00 00 00</div>
<div class="m" style="left:360px;top:955.0px;color:#000080">00 00 00 00 00 00 00 00</div>
<div class="m" style="left:615px;top:955.0px;color:#0000FF">................</div>
<div class="m" style="left:3px;top:975.4px;color:#0000FF">006040F0</div>
<div class="m" style="left:105px;top:975.4px;color:#000080">00 00 00 00 00 00 00 00</div>
<div class="m" style="left:360px;top:975.4px;color:#000080">24 7C 19 5C C2 5E 51 A8</div>
<div class="m" style="left:615px;top:975.4px;color:#0000FF">........$|.\.^Q.</div>
<div class="m" style="left:3px;top:995.8px;color:#7A6A62">00604100</div>
<div class="m" style="left:105px;top:995.8px;color:#000080">00 00 00 00 00 00 00 00</div>
<div class="m" style="left:360px;top:995.8px;color:#000080">21 00 00 00 00 00 00 00</div>
<div class="m" style="left:615px;top:995.8px;color:#0000FF">........!.......</div>
<div class="m" style="left:3px;top:1016.2px;color:#7A6A62">00604110</div>
<div class="m" style="left:105px;top:1016.2px;color:#000080">62 62 62 00 00 00 00 00</div>
<div class="m" style="left:360px;top:1016.2px;color:#000080">00 00 00 00 00 00 00 00</div>
<div class="m" style="left:615px;top:1016.2px;color:#0000FF">bbb.............</div>
<div class="m" style="left:3px;top:1036.5px;color:#7A6A62">00604120</div>
<div class="m" style="left:105px;top:1036.5px;color:#000080">00 00 00 00 00 00 00 00</div>
<div class="m" style="left:360px;top:1036.5px;color:#000080">E1 0E 02 00 00 00 00 00</div>
<div class="m" style="left:615px;top:1036.5px;color:#0000FF">................</div>
<div style="position:absolute;left:103px;top:975px;width:20px;height:19px;background:#000080"></div>
<div class="m" style="left:105px;top:975.4px;color:#FFFFFF">00</div>
<div style="position:absolute;left:1039px;top:843px;width:591px;height:25px;background:#FFFFFF;border-top:1px solid #C9C6B4;border-bottom:1px solid #C9C6B4;border-left:1px solid #C9C6B4"></div><svg style="position:absolute;left:1044px;top:846px" width="18" height="18" viewBox="0 0 18 18"><rect x="1" y="1" width="16" height="16" fill="#EAF4FC" stroke="#2F6FD8"/><rect x="1" y="1" width="16" height="2" fill="#2F7FE8"/><path d="M9 5 L13 7.5 L13 12 L9 14.5 L5 12 L5 7.5 Z" fill="none" stroke="#4040E0" stroke-width="1.2"/></svg><div class="t" style="left:1071px;top:848.8px;font-family:'Liberation Mono', monospace;font-size:12.6px;line-height:14px;color:#000;transform:scaleY(1.16);transform-origin:0 0;">Stack view</div><svg style="position:absolute;left:1560px;top:849px" width="12" height="12" viewBox="0 0 12 12"><rect x="1" y="1" width="10" height="10" fill="none" stroke="#000" stroke-width="1.3"/><rect x="1" y="1" width="10" height="1.5" fill="#000"/></svg><svg style="position:absolute;left:1587px;top:849px" width="12" height="12" viewBox="0 0 12 12"><rect x="4" y="1" width="7" height="6" fill="none" stroke="#000" stroke-width="1.2"/><rect x="4" y="1" width="7" height="2" fill="#000"/><rect x="1" y="5" width="7" height="6" fill="#ECE9D8" stroke="#000" stroke-width="1.2"/><rect x="1" y="5" width="7" height="2" fill="#000"/></svg><svg style="position:absolute;left:1612px;top:849px" width="12" height="12" viewBox="0 0 12 12"><path d="M1.5 1.5 L10.5 10.5 M10.5 1.5 L1.5 10.5" stroke="#000" stroke-width="1.6"/></svg>
<div style="position:absolute;left:1039px;top:871px;width:591px;height:228px;background:#C8FFFF;border-top:1px solid #8FA4C0;border-bottom:1px solid #8FA4C0;border-left:1px solid #8FA4C0"></div>
<div style="position:absolute;left:1040px;top:872px;width:571px;height:20px;background:#66CCFF"></div>
<div style="position:absolute;left:1040px;top:1050px;width:571px;height:27px;background:#ECE9D8"></div>
<div class="t" style="left:1041px;top:1056.5px;font-family:'Liberation Mono', monospace;font-size:14.95px;line-height:16px;color:#111;transform:scaleY(1.1);transform-origin:0 0">UNKNOWN</div>
<div class="t" style="left:1111px;top:1056.5px;font-family:'Liberation Mono', monospace;font-size:14.95px;line-height:16px;color:#111;transform:scaleY(1.1);transform-origin:0 0">00007FFFFFFFE239: [stack]:00007F</div>
<div class="t" style="left:1405px;top:1056.5px;font-family:'Liberation Mono', monospace;font-size:14.95px;line-height:16px;color:#111;transform:scaleY(1.1);transform-origin:0 0">(Synchronized with RSP)</div>
<div style="position:absolute;left:1105px;top:1053px;width:1px;height:20px;background:#C9C6B4"></div>
<div style="position:absolute;left:1106px;top:1053px;width:1px;height:20px;background:#fff"></div>
<div style="position:absolute;left:1398px;top:1053px;width:1px;height:20px;background:#C9C6B4"></div>
<div style="position:absolute;left:1399px;top:1053px;width:1px;height:20px;background:#fff"></div>
<div style="position:absolute;left:1611px;top:872px;width:19px;height:205px;background:linear-gradient(90deg,#EEEDE5,#FFFFFF)"></div><div style="position:absolute;left:1613px;top:874px;width:15px;height:19px;background:linear-gradient(135deg,#E2EBFE,#B6CAF5);border:1px solid #B3C6EE;border-radius:2px"><svg style="position:absolute;left:0px;top:0px" width="13" height="17" viewBox="0 0 13 17"><path d="M1.5 11 L6.5 6 L11.5 11" fill="none" stroke="#4D6185" stroke-width="2"/></svg></div><div style="position:absolute;left:1613px;top:1056px;width:15px;height:19px;background:linear-gradient(135deg,#E2EBFE,#B6CAF5);border:1px solid #B3C6EE;border-radius:2px"><svg style="position:absolute;left:0px;top:0px" width="13" height="17" viewBox="0 0 13 17"><path d="M1.5 6 L6.5 11 L11.5 6" fill="none" stroke="#4D6185" stroke-width="2"/></svg></div><div style="position:absolute;left:1613px;top:1043px;width:15px;height:9px;background:linear-gradient(90deg,#C9D8FC,#B4C8F6);border:1px solid #B5C8F0;border-radius:2px"></div><div style="position:absolute;left:1616px;top:1044px;width:8px;height:1px;background:#EEF3FF"></div><div style="position:absolute;left:1616px;top:1046px;width:8px;height:1px;background:#EEF3FF"></div><div style="position:absolute;left:1616px;top:1048px;width:8px;height:1px;background:#EEF3FF"></div><div style="position:absolute;left:1616px;top:1050px;width:8px;height:1px;background:#EEF3FF"></div>
<div style="position:absolute;left:1040px;top:1077px;width:571px;height:20px;background:linear-gradient(#EEEDE5,#FFFFFF)"></div><div style="position:absolute;left:1042px;top:1078px;width:18px;height:18px;background:linear-gradient(135deg,#E2EBFE,#B6CAF5);border:1px solid #B3C6EE;border-radius:2px"><svg style="position:absolute;left:0px;top:0px" width="16" height="16" viewBox="0 0 16 16"><path d="M10 3.0 L5 8.0 L10 13.0" fill="none" stroke="#4D6185" stroke-width="2"/></svg></div><div style="position:absolute;left:1591px;top:1078px;width:18px;height:18px;background:linear-gradient(135deg,#E2EBFE,#B6CAF5);border:1px solid #B3C6EE;border-radius:2px"><svg style="position:absolute;left:0px;top:0px" width="16" height="16" viewBox="0 0 16 16"><path d="M6 3.0 L11 8.0 L6 13.0" fill="none" stroke="#4D6185" stroke-width="2"/></svg></div><div style="position:absolute;left:1060px;top:1078px;width:252px;height:18px;background:linear-gradient(#C9D8FC,#B4C8F6);border:1px solid #B5C8F0;border-radius:2px"></div><div style="position:absolute;left:1183px;top:1083px;width:1px;height:8px;background:#EEF3FF"></div><div style="position:absolute;left:1185px;top:1083px;width:1px;height:8px;background:#EEF3FF"></div><div style="position:absolute;left:1187px;top:1083px;width:1px;height:8px;background:#EEF3FF"></div><div style="position:absolute;left:1189px;top:1083px;width:1px;height:8px;background:#EEF3FF"></div>
<div style="position:absolute;left:1611px;top:1077px;width:19px;height:21px;background:#ECE9D8"></div>
<div class="m" style="left:1042px;top:873.5px;color:#7A6A62">00007FFFFFFFE220</div>
<div class="m" style="left:1226px;top:873.5px;color:#007000">0000000200000000</div>
<div class="m" style="left:1042px;top:893.9px;color:#7A6A62">00007FFFFFFFE228</div>
<div class="m" style="left:1226px;top:893.9px;color:#007000">0000000000000000</div>
<div class="m" style="left:1042px;top:914.3px;color:#7A6A62">00007FFFFFFFE230</div>
<div class="m" style="left:1226px;top:914.3px;color:#007000">0000000000000000</div>
<div class="m" style="left:1042px;top:934.6px;color:#0000FF">00007FFFFFFFE238</div>
<div style="position:absolute;left:1224px;top:935px;width:163px;height:18px;background:#007000"></div>
<div class="m" style="left:1226px;top:934.6px;color:#FFFFFF">0000000000000000</div>
<div class="m" style="left:1042px;top:955.0px;color:#7A6A62">00007FFFFFFFE240</div>
<div class="m" style="left:1226px;top:955.0px;color:#007000">0000000000000000</div>
<div class="m" style="left:1042px;top:975.4px;color:#7A6A62">00007FFFFFFFE248</div>
<div class="m" style="left:1226px;top:975.4px;color:#007000">00000000004015ED</div>
<div class="m" style="left:1408px;top:975.4px;color:#0000FF;width:203px;overflow:hidden">show_menu+72</div>
<div class="m" style="left:1042px;top:995.8px;color:#7A6A62">00007FFFFFFFE250</div>
<div class="m" style="left:1226px;top:995.8px;color:#007000">00007FFFFFFFE260</div>
<div class="m" style="left:1408px;top:995.8px;color:#7A6A62;width:203px;overflow:hidden">[stack]:00007FFFFFFF</div>
<div class="m" style="left:1042px;top:1016.2px;color:#7A6A62">00007FFFFFFFE258</div>
<div class="m" style="left:1226px;top:1016.2px;color:#007000">000000000040164B</div>
<div class="m" style="left:1408px;top:1016.2px;color:#0000FF;width:203px;overflow:hidden">mainf+5C</div>
<div style="position:absolute;left:1416px;top:934px;width:2px;height:18px;background:#000"></div>
<div style="position:absolute;left:0px;top:1104px;width:1630px;height:2px;background:#CFCCBA"></div>
<div class="t" style="left:1524px;top:1086px;font-family:'Liberation Serif', serif;font-size:14px;color:#111;text-shadow:0 0 2px #fff,0 0 2px #fff">drops.wooyun.org</div>
<svg style="position:absolute;left:0;top:0" width="1630" height="1106" viewBox="0 0 1630 1106"><defs><filter id="sh" x="-10%" y="-10%" width="120%" height="130%"><feGaussianBlur in="SourceAlpha" stdDeviation="2.5"/><feOffset dx="3" dy="3" result="b"/><feComponentTransfer><feFuncA type="linear" slope="0.45"/></feComponentTransfer><feMerge><feMergeNode/><feMergeNode in="SourceGraphic"/></feMerge></filter></defs><rect x="48" y="147" width="586" height="87" rx="6" ry="6" fill="none" stroke="#FF2A1C" stroke-width="12" filter="url(#sh)"/><g filter="url(#sh)" stroke="#FF2A1C" stroke-width="11.5" stroke-linecap="round" stroke-linejoin="round" fill="none"><path d="M300.5 709 L96 848"/><path d="M113 808 L90 853 L144 851"/><path d="M92 851 L106 824 L126 848 Z" fill="#FF2A1C" stroke-width="4"/></g></svg>
</body></html>
